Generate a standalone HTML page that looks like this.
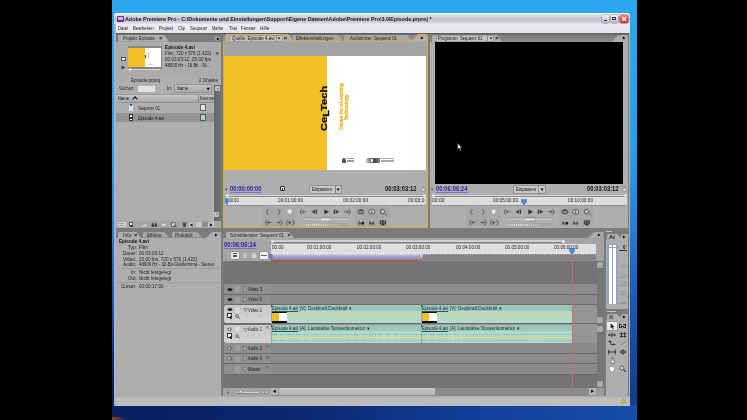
<!DOCTYPE html>
<html><head><meta charset="utf-8"><title>Adobe Premiere Pro</title>
<style>
html,body{margin:0;padding:0;background:#000;}
body{width:747px;height:420px;overflow:hidden;position:relative;font-family:"Liberation Sans",sans-serif;}
#s{position:absolute;left:0;top:0;width:747px;height:420px;overflow:hidden;will-change:transform;}
#s div,#s svg,#s .t{position:absolute;}
#s .t{white-space:nowrap;transform-origin:0 50%;display:block;}
</style></head><body><div id="s">
<div style="left:111.50px;top:0.00px;width:525.60px;height:420.00px;background:linear-gradient(#2ba7f0 0%,#2aa0ea 35%,#2586dc 50%,#2072cc 60%,#1a5ab8 72%,#15469c 85%,#133c8c 96%,#123a88 100%);"></div>
<div style="left:111.50px;top:0.00px;width:6.00px;height:420.00px;background:linear-gradient(#2ba7f0 0%,#2aa2ec 35%,#2288dc 52%,#185cbc 70%,#0f3482 83%,#0a2464 92%,#0a205c 100%);"></div>
<div style="left:111.50px;top:405.00px;width:525.60px;height:15.00px;background:linear-gradient(90deg,#0a2060 0%,#0b2870 35%,#12409a 70%,#174ea8 100%);"></div>
<div style="left:111.50px;top:416.50px;width:14.00px;height:3.50px;background:linear-gradient(90deg,#8a4424,#0a2060);"></div>
<div style="left:114.20px;top:13.30px;width:516.10px;height:392.40px;background:#aeb0c2;border-radius:2.5px 2.5px 0 0;"></div>
<div style="left:114.40px;top:13.30px;width:515.80px;height:11.00px;background:linear-gradient(#ffffff 0%,#e0e0ea 18%,#c2c2d0 55%,#cacad8 80%,#e6e6ee 100%);border-radius:2.5px 2.5px 0 0;"></div>
<div style="left:117.00px;top:15.50px;width:6.50px;height:6.50px;background:#6a2a80;border-radius:1px;"></div>
<div style="left:118.00px;top:16.50px;width:4.50px;height:3.20px;background:#d8b8e0;"></div>
<span class="t" style="left:125.00px;top:16.14px;font-size:5.6px;line-height:6.72px;color:#181820;font-weight:bold;transform:scaleX(0.956);">Adobe Premiere Pro - C:\Dokumente und Einstellungen\Support\Eigene Dateien\Adobe\Premiere Pro\3.0\Episode.prproj *</span>
<div style="left:601.50px;top:14.80px;width:7.20px;height:8.00px;background:linear-gradient(#f4f4fa,#b4b4c8);border-radius:1.5px;box-shadow:0 0 0 0.5px #8888a0;"></div>
<div style="left:603.50px;top:20.00px;width:3.00px;height:1.00px;background:#333;"></div>
<div style="left:610.50px;top:14.80px;width:7.20px;height:8.00px;background:linear-gradient(#f4f4fa,#b4b4c8);border-radius:1.5px;box-shadow:0 0 0 0.5px #8888a0;"></div>
<div style="left:612.30px;top:16.80px;width:3.60px;height:3.60px;background:transparent;border:0.7px solid #333;border-top-width:1.4px;box-sizing:border-box;"></div>
<div style="left:620.00px;top:14.80px;width:8.20px;height:8.00px;background:linear-gradient(#f08878,#c83428);border-radius:1.5px;box-shadow:0 0 0 0.5px #a04040;"></div>
<svg style="left:620.00px;top:14.80px;" width="8.2" height="8" viewBox="0 0 8.2 8"><path d="M2.3 2.2L5.9 5.8M5.9 2.2L2.3 5.8" stroke="#fff" stroke-width="1.2" fill="none"/></svg>
<div style="left:115.50px;top:24.30px;width:514.00px;height:8.70px;background:linear-gradient(#ececf4,#e4e4ee);"></div>
<span class="t" style="left:118.00px;top:25.34px;font-size:5.6px;line-height:6.72px;color:#222;transform:scaleX(0.765);">Datei</span>
<span class="t" style="left:133.00px;top:25.34px;font-size:5.6px;line-height:6.72px;color:#222;transform:scaleX(0.757);">Bearbeiten</span>
<span class="t" style="left:159.00px;top:25.34px;font-size:5.6px;line-height:6.72px;color:#222;transform:scaleX(0.803);">Projekt</span>
<span class="t" style="left:178.00px;top:25.34px;font-size:5.6px;line-height:6.72px;color:#222;transform:scaleX(0.726);">Clip</span>
<span class="t" style="left:190.00px;top:25.34px;font-size:5.6px;line-height:6.72px;color:#222;transform:scaleX(0.783);">Sequenz</span>
<span class="t" style="left:212.30px;top:25.34px;font-size:5.6px;line-height:6.72px;color:#222;transform:scaleX(0.720);">Marke</span>
<span class="t" style="left:228.50px;top:25.34px;font-size:5.6px;line-height:6.72px;color:#222;transform:scaleX(0.771);">Titel</span>
<span class="t" style="left:240.80px;top:25.34px;font-size:5.6px;line-height:6.72px;color:#222;transform:scaleX(0.780);">Fenster</span>
<span class="t" style="left:260.00px;top:25.34px;font-size:5.6px;line-height:6.72px;color:#222;transform:scaleX(0.848);">Hilfe</span>
<div style="left:115.50px;top:33.00px;width:513.50px;height:362.50px;background:#7b7b7b;"></div>
<div style="left:115.50px;top:33.00px;width:513.50px;height:2.00px;background:linear-gradient(#555,#7b7b7b);"></div>
<div style="left:115.50px;top:395.50px;width:514.00px;height:10.00px;background:linear-gradient(#a8a8a8,#bdbdbd 20%,#bcbcbc);"></div>
<svg style="left:621.30px;top:398.00px;" width="5" height="5.5" viewBox="0 0 5 5.5"><path d="M2.5 0.5L4.7 4.8H0.3Z" fill="#e8c820" stroke="#8a6a00" stroke-width="0.4"/></svg>
<div style="left:116.00px;top:41.50px;width:104.60px;height:186.00px;background:#aeaeae;"></div>
<div style="left:116.00px;top:41.50px;width:104.60px;height:34.00px;background:#ababab;"></div>
<svg style="left:117.50px;top:35.00px;" width="51" height="6.7" viewBox="0 0 51 6.7"><path d="M0 6.7 L0 1.5 Q0 0 1.5 0 L45 0 Q47 0 48 2 L51 6.7Z" fill="#aeaeae"/></svg>
<span class="t" style="left:123.00px;top:35.32px;font-size:5.3px;line-height:6.36px;color:#222;transform:scaleX(0.829);">Projekt: Episode</span>
<span class="t" style="left:159.00px;top:35.20px;font-size:5.5px;line-height:6.60px;color:#111;font-weight:bold;">×</span>
<div style="left:214.00px;top:36.00px;width:6.00px;height:5.00px;background:#999;border-radius:3px;"></div>
<svg style="left:215.50px;top:36.50px;" width="4" height="4" viewBox="0 0 4 4"><path d="M1 0.5L3.4 2L1 3.5Z" fill="#111"/></svg>
<div style="left:128.00px;top:45.50px;width:33.50px;height:24.50px;background:#868686;"></div>
<div style="left:128.30px;top:48.30px;width:16.70px;height:18.60px;background:#f2bf27;"></div>
<div style="left:145.00px;top:48.30px;width:16.30px;height:18.60px;background:#ffffff;"></div>
<div style="left:147.50px;top:51.50px;width:0.60px;height:6.50px;background:#f0cc60;"></div>
<div style="left:144.80px;top:54.50px;width:0.60px;height:3.20px;background:#444;"></div>
<div style="left:148.00px;top:64.00px;width:5.00px;height:0.80px;background:#ccc;"></div>
<div style="left:128.00px;top:69.00px;width:33.00px;height:1.20px;background:#d8d8d8;border-radius:1px;"></div>
<div style="left:128.50px;top:68.20px;width:2.50px;height:2.50px;background:#eee;border-radius:50%;"></div>
<div style="left:121.00px;top:57.00px;width:4.50px;height:3.50px;background:#e8e8e8;border:0.5px solid #555;box-sizing:border-box;"></div>
<svg style="left:121.00px;top:64.50px;" width="5" height="5" viewBox="0 0 5 5"><path d="M0.5 0.5L4.5 2.5L0.5 4.5Z" fill="#444"/></svg>
<span class="t" style="left:165.00px;top:44.12px;font-size:5.3px;line-height:6.36px;color:#111;font-weight:bold;transform:scaleX(0.886);">Episode 4.avi</span>
<span class="t" style="left:165.00px;top:50.30px;font-size:5px;line-height:6.00px;color:#222;transform:scaleX(0.895);">Film, 720 x 576 (1,422)</span>
<span class="t" style="left:215.50px;top:50.30px;font-size:5px;line-height:6.00px;color:#222;">▾</span>
<span class="t" style="left:165.00px;top:56.20px;font-size:5px;line-height:6.00px;color:#222;transform:scaleX(0.924);">00:03:03:12, 25,00 fps</span>
<span class="t" style="left:165.00px;top:62.00px;font-size:5px;line-height:6.00px;color:#222;transform:scaleX(0.866);">48000 Hz - 16 Bit - St...</span>
<div style="left:120.00px;top:77.00px;width:6.00px;height:5.00px;background:#aaa;border-radius:1px;"></div>
<span class="t" style="left:131.00px;top:77.00px;font-size:5px;line-height:6.00px;color:#222;transform:scaleX(0.900);">Episode.prproj</span>
<span class="t" style="left:199.00px;top:77.00px;font-size:5px;line-height:6.00px;color:#222;transform:scaleX(0.888);">2 Objekte</span>
<span class="t" style="left:119.00px;top:85.30px;font-size:5px;line-height:6.00px;color:#222;transform:scaleX(0.845);">Suchen:</span>
<div style="left:137.00px;top:85.00px;width:18.00px;height:6.70px;background:#e4e4e4;box-shadow:inset 0.5px 0.5px 0 #888;"></div>
<span class="t" style="left:167.00px;top:85.30px;font-size:5px;line-height:6.00px;color:#222;transform:scaleX(0.989);">In:</span>
<div style="left:175.00px;top:85.00px;width:36.00px;height:6.70px;background:linear-gradient(#c4c4c4,#a8a8a8);box-shadow:0 0 0 0.5px #777;"></div>
<span class="t" style="left:177.00px;top:85.30px;font-size:5px;line-height:6.00px;color:#111;transform:scaleX(0.825);">Name</span>
<svg style="left:206.00px;top:86.50px;" width="4.5" height="4" viewBox="0 0 4.5 4"><path d="M0.5 0.8H4L2.25 3.4Z" fill="#111"/></svg>
<div style="left:213.50px;top:85.00px;width:7.50px;height:136.40px;background:linear-gradient(90deg,#646464,#707476);"></div>
<div style="left:212.60px;top:92.00px;width:0.90px;height:129.00px;background:#bababa;"></div>
<div style="left:214.50px;top:85.50px;width:5.50px;height:5.50px;background:#c0c0c0;border-radius:1px;"></div>
<div style="left:214.20px;top:211.80px;width:5.20px;height:5.60px;background:#c0c0c0;border-radius:1px;"></div>
<svg style="left:214.80px;top:213.30px;" width="4" height="3" viewBox="0 0 4 3"><path d="M0.5 0.5H3.5L2 2.6Z" fill="#888"/></svg>
<svg style="left:215.50px;top:86.50px;" width="4" height="3" viewBox="0 0 4 3"><path d="M0.5 2.5H3.5L2 0.4Z" fill="#888"/></svg>
<div style="left:116.00px;top:94.50px;width:98.00px;height:7.30px;background:linear-gradient(#c6c6c6,#a9a9a9);box-shadow:0 0.5px 0 #777,0 -0.5px 0 #888;"></div>
<div style="left:198.30px;top:94.50px;width:0.70px;height:7.30px;background:#888;"></div>
<span class="t" style="left:118.00px;top:95.20px;font-size:5px;line-height:6.00px;color:#111;transform:scaleX(0.825);">Name</span>
<svg style="left:131.50px;top:96.00px;" width="6" height="4" viewBox="0 0 6 4"><path d="M0.7 3.4L3 0.8L5.3 3.4" stroke="#111" stroke-width="1.1" fill="none"/></svg>
<span class="t" style="left:200.00px;top:95.20px;font-size:5px;line-height:6.00px;color:#111;transform:scaleX(0.826);">Kennze</span>
<div style="left:116.00px;top:113.00px;width:98.00px;height:8.70px;background:#949494;"></div>
<div style="left:129.00px;top:104.50px;width:4.00px;height:6.00px;background:#d8e4f0;border-radius:1px;"></div>
<div style="left:130.00px;top:103.50px;width:1.50px;height:2.00px;background:#3060c0;"></div>
<span class="t" style="left:138.00px;top:104.50px;font-size:5px;line-height:6.00px;color:#222;transform:scaleX(0.824);">Sequenz 01</span>
<div style="left:199.50px;top:104.30px;width:6.50px;height:6.50px;background:#d8e8e2;border:0.6px solid #666;box-sizing:border-box;"></div>
<div style="left:128.50px;top:114.20px;width:4.50px;height:6.50px;background:#eee;border:0.6px solid #333;box-sizing:border-box;"></div>
<div style="left:129.80px;top:116.50px;width:2.00px;height:2.50px;background:#333;"></div>
<span class="t" style="left:138.00px;top:114.50px;font-size:5px;line-height:6.00px;color:#111;transform:scaleX(0.866);">Episode 4.avi</span>
<div style="left:199.50px;top:114.00px;width:6.50px;height:6.50px;background:#a8d8c4;border:0.6px solid #555;box-sizing:border-box;"></div>
<div style="left:116.00px;top:221.40px;width:104.60px;height:6.20px;background:#a6a6a6;"></div>
<div style="left:117.00px;top:221.80px;width:8.50px;height:5.60px;background:#d2d2d2;border-radius:1px;"></div>
<div style="left:118.30px;top:222.80px;width:1.20px;height:1.20px;background:#666;"></div>
<div style="left:118.30px;top:224.80px;width:1.20px;height:1.20px;background:#666;"></div>
<div style="left:120.30px;top:222.80px;width:4.00px;height:1.20px;background:#999;"></div>
<div style="left:120.30px;top:224.80px;width:4.00px;height:1.20px;background:#999;"></div>
<div style="left:128.60px;top:222.00px;width:4.80px;height:3.60px;background:#f4f4f4;border:0.5px solid #555;box-sizing:border-box;"></div>
<div style="left:129.50px;top:225.60px;width:3.00px;height:1.20px;background:#333;"></div>
<svg style="left:140.50px;top:222.50px;" width="7" height="4.5" viewBox="0 0 7 4.5"><path d="M0.5 4V1.5H3V0.8H6.5V4Z" fill="#c9c9c9" stroke="#888" stroke-width="0.4"/></svg>
<svg style="left:150.50px;top:222.00px;" width="7" height="5.5" viewBox="0 0 7 5.5"><circle cx="1.8" cy="3.6" r="1.4" fill="#3a3a3a"/><circle cx="4.8" cy="3.6" r="1.4" fill="#3a3a3a"/><rect x="1.2" y="0.8" width="1.3" height="2.5" fill="#3a3a3a"/><rect x="4.2" y="0.8" width="1.3" height="2.5" fill="#3a3a3a"/></svg>
<svg style="left:160.50px;top:222.30px;" width="6" height="5" viewBox="0 0 6 5"><path d="M0.5 4.2V1H2.2L2.8 1.6H5V4.2Z" fill="#e2e2e2" stroke="#777" stroke-width="0.4"/></svg>
<svg style="left:171.00px;top:222.00px;" width="7" height="5.5" viewBox="0 0 7 5.5"><rect x="0.6" y="0.8" width="3.4" height="3.6" fill="#ddd" stroke="#333" stroke-width="0.6"/><path d="M3.8 3.2L5.6 5.2" stroke="#222" stroke-width="0.9"/></svg>
<svg style="left:181.50px;top:222.00px;" width="5" height="5.5" viewBox="0 0 5 5.5"><path d="M0.8 1.4H4.2L3.7 5H1.3Z" fill="#444"/><rect x="0.5" y="0.6" width="4" height="0.8" fill="#333"/></svg>
<div style="left:188.80px;top:221.80px;width:5.50px;height:5.60px;background:#c8c8c8;"></div>
<svg style="left:189.30px;top:222.60px;" width="4.5" height="4" viewBox="0 0 4.5 4"><path d="M3.6 0.3L0.8 2L3.6 3.7Z" fill="#111"/></svg>
<div style="left:195.50px;top:221.80px;width:6.50px;height:5.60px;background:#c6c6c6;border-radius:1px;"></div>
<div style="left:202.00px;top:221.80px;width:5.50px;height:5.60px;background:#8e8e8e;"></div>
<div style="left:207.50px;top:221.80px;width:6.00px;height:5.60px;background:#c8c8c8;"></div>
<svg style="left:208.50px;top:222.60px;" width="4.5" height="4" viewBox="0 0 4.5 4"><path d="M0.9 0.3L3.7 2L0.9 3.7Z" fill="#111"/></svg>
<div style="left:116.00px;top:237.50px;width:104.60px;height:158.00px;background:#aeaeae;"></div>
<svg style="left:118.00px;top:231.50px;" width="23" height="6.2" viewBox="0 0 23 6.2"><path d="M0 6.2 L0 1.5 Q0 0 1.5 0 L17 0 Q19 0 20 2 L23 6.2Z" fill="#aeaeae"/></svg>
<span class="t" style="left:122.50px;top:231.80px;font-size:5px;line-height:6.00px;color:#222;transform:scaleX(1.019);">Info</span>
<span class="t" style="left:134.00px;top:231.50px;font-size:5.5px;line-height:6.60px;color:#111;font-weight:bold;">×</span>
<svg style="left:143.00px;top:232.00px;" width="26" height="5.6" viewBox="0 0 26 5.6"><path d="M0 5.6 L0 1.5 Q0 0 1.5 0 L20 0 Q22 0 23 2 L26 5.6Z" fill="#a6a6a6"/></svg>
<span class="t" style="left:146.50px;top:231.80px;font-size:5px;line-height:6.00px;color:#222;transform:scaleX(0.937);">Effekte</span>
<svg style="left:171.50px;top:232.00px;" width="30" height="5.6" viewBox="0 0 30 5.6"><path d="M0 5.6 L0 1.5 Q0 0 1.5 0 L24 0 Q26 0 27 2 L30 5.6Z" fill="#a6a6a6"/></svg>
<span class="t" style="left:175.00px;top:231.80px;font-size:5px;line-height:6.00px;color:#222;transform:scaleX(0.900);">Protokoll</span>
<svg style="left:203.00px;top:231.50px;" width="18" height="6.2" viewBox="0 0 18 6.2"><path d="M0 6.2 Q4 6.2 6 3 Q8 0 11 0 H18 V6.2Z" fill="#aeaeae"/></svg>
<svg style="left:214.00px;top:232.80px;" width="4.5" height="4" viewBox="0 0 4.5 4"><path d="M0.9 0.4L3.7 2L0.9 3.6Z" fill="#111"/></svg>
<span class="t" style="left:118.50px;top:238.18px;font-size:5.2px;line-height:6.24px;color:#111;font-weight:bold;transform:scaleX(0.903);">Episode 4.avi</span>
<span class="t" style="left:127.71px;top:244.30px;font-size:5px;line-height:6.00px;color:#222;transform:scaleX(0.930);">Typ:</span>
<span class="t" style="left:138.50px;top:244.30px;font-size:5px;line-height:6.00px;color:#222;transform:scaleX(0.930);">Film</span>
<span class="t" style="left:122.54px;top:250.00px;font-size:5px;line-height:6.00px;color:#222;transform:scaleX(0.930);">Dauer:</span>
<span class="t" style="left:138.50px;top:250.00px;font-size:5px;line-height:6.00px;color:#222;transform:scaleX(0.930);">00:03:03:12</span>
<span class="t" style="left:123.40px;top:255.70px;font-size:5px;line-height:6.00px;color:#222;transform:scaleX(0.930);">Video:</span>
<span class="t" style="left:138.50px;top:255.70px;font-size:5px;line-height:6.00px;color:#222;transform:scaleX(0.930);">25,00 fps, 720 x 576 (1,422)</span>
<span class="t" style="left:123.32px;top:261.40px;font-size:5px;line-height:6.00px;color:#222;transform:scaleX(0.930);">Audio:</span>
<span class="t" style="left:138.50px;top:261.40px;font-size:5px;line-height:6.00px;color:#222;transform:scaleX(0.868);">48000 Hz - 32-Bit-Gleitkomma - Stereo</span>
<div style="left:117.00px;top:268.00px;width:103.00px;height:0.50px;background:#9e9e9e;"></div>
<span class="t" style="left:131.33px;top:269.30px;font-size:5px;line-height:6.00px;color:#222;transform:scaleX(0.930);">In:</span>
<span class="t" style="left:138.50px;top:269.30px;font-size:5px;line-height:6.00px;color:#222;transform:scaleX(0.930);">Nicht festgelegt</span>
<span class="t" style="left:127.71px;top:275.00px;font-size:5px;line-height:6.00px;color:#222;transform:scaleX(0.930);">Out:</span>
<span class="t" style="left:138.50px;top:275.00px;font-size:5px;line-height:6.00px;color:#222;transform:scaleX(0.930);">Nicht festgelegt</span>
<div style="left:117.00px;top:281.50px;width:103.00px;height:0.50px;background:#9e9e9e;"></div>
<span class="t" style="left:120.50px;top:282.70px;font-size:5px;line-height:6.00px;color:#222;transform:scaleX(0.930);">Cursor:</span>
<span class="t" style="left:138.50px;top:282.70px;font-size:5px;line-height:6.00px;color:#222;transform:scaleX(0.930);">00:00:17:00</span>
<div style="left:222.50px;top:40.80px;width:205.50px;height:187.00px;background:#aeaeae;box-shadow:inset 0 0 0 1px #d9ac38;"></div>
<div style="left:222.50px;top:34.50px;width:205.50px;height:6.50px;background:#8a8a8a;"></div>
<svg style="left:293.00px;top:35.00px;" width="50" height="5.9" viewBox="0 0 50 5.9"><path d="M0 5.9 L0 1.5 Q0 0 1.5 0 L44 0 Q46 0 47 2 L50 5.9Z" fill="#a6a6a6"/></svg>
<span class="t" style="left:295.50px;top:35.20px;font-size:5px;line-height:6.00px;color:#222;transform:scaleX(0.890);">Effekteinstellungen</span>
<svg style="left:344.00px;top:35.00px;" width="68" height="5.9" viewBox="0 0 68 5.9"><path d="M0 5.9 L0 1.5 Q0 0 1.5 0 L62 0 Q64 0 65 2 L68 5.9Z" fill="#a6a6a6"/></svg>
<span class="t" style="left:350.00px;top:35.20px;font-size:5px;line-height:6.00px;color:#222;transform:scaleX(0.863);">Audiomixer: Sequenz 01</span>
<svg style="left:225.00px;top:34.30px;" width="72" height="8.5" viewBox="0 0 72 8.5"><path d="M0.5 8.5 V2 Q0.5 0.5 2 0.5 H61.5 Q64 0.5 65 2.5 L67.8 7.5 V8.5Z" fill="#aeaeae"/><path d="M0.5 7.5 V2 Q0.5 0.5 2 0.5 H61.5 Q64 0.5 65 2.5 L67.5 7" fill="none" stroke="#d9ac38" stroke-width="1"/></svg>
<div style="left:229.50px;top:35.80px;width:46.00px;height:5.00px;background:#c4c4c4;box-shadow:0 0 0 0.4px #888;"></div>
<span class="t" style="left:231.50px;top:35.40px;font-size:5px;line-height:6.00px;color:#111;transform:scaleX(0.900);">Quelle: Episode 4.avi</span>
<div style="left:276.50px;top:35.80px;width:5.00px;height:5.00px;background:#c8c8c8;box-shadow:0 0 0 0.4px #666;"></div>
<svg style="left:277.00px;top:36.80px;" width="4" height="3" viewBox="0 0 4 3"><path d="M0.6 0.6H3.4L2 2.5Z" fill="#111"/></svg>
<span class="t" style="left:283.70px;top:35.10px;font-size:5.5px;line-height:6.60px;color:#111;font-weight:bold;">×</span>
<svg style="left:410.00px;top:34.30px;" width="18" height="8.5" viewBox="0 0 18 8.5"><path d="M1 8.5 L1.5 7 Q3 7 5 3.5 Q7 0.5 10 0.5 H16 Q17 0.5 17 2 V8.5Z" fill="#aeaeae"/><path d="M0 7 Q3 7 5 3.5 Q7 0.5 10 0.5 H16 Q17.5 0.5 17.5 2 V8.5" fill="none" stroke="#d9ac38" stroke-width="1"/></svg>
<svg style="left:420.00px;top:36.30px;" width="4.5" height="4" viewBox="0 0 4.5 4"><path d="M0.9 0.4L3.7 2L0.9 3.6Z" fill="#111"/></svg>
<div style="left:223.50px;top:41.80px;width:203.50px;height:13.80px;background:#a3a3a3;"></div>
<div style="left:223.50px;top:55.50px;width:103.60px;height:114.60px;background:#f4c027;"></div>
<div style="left:327.10px;top:55.50px;width:99.40px;height:114.60px;background:#ffffff;"></div>
<span class="t" style="left:319.6px;top:131.2px;font-size:9.3px;line-height:9.3px;font-weight:bold;color:#111;transform-origin:0 0;transform:rotate(-90deg) scaleX(1.17);letter-spacing:0.1px;-webkit-text-stroke:0.3px #111;">Ce<span style="position:relative;top:2.2px;font-weight:bold;-webkit-text-stroke:0.45px #111;">L</span>Tech</span>
<span class="t" style="left:338.6px;top:129.6px;font-size:4.6px;line-height:5.2px;font-weight:bold;color:#eab520;-webkit-text-stroke:0.25px #eab520;transform-origin:0 0;transform:rotate(-90deg);width:45px;text-align:center;">Centre for e-Learning<br>Technology</span>
<div style="left:341.50px;top:157.50px;width:4.00px;height:5.00px;background:#555;border-radius:2px 2px 1px 1px;"></div>
<div style="left:347.00px;top:158.20px;width:7.00px;height:0.70px;background:#999;"></div>
<div style="left:347.00px;top:159.70px;width:7.00px;height:0.70px;background:#999;"></div>
<div style="left:347.00px;top:161.20px;width:7.00px;height:0.70px;background:#999;"></div>
<div style="left:365.50px;top:157.50px;width:14.00px;height:5.00px;background:linear-gradient(90deg,#ccc,#666 40%,#444 60%,#888);"></div>
<div style="left:371.00px;top:158.50px;width:2.00px;height:3.00px;background:#eee;"></div>
<div style="left:381.00px;top:158.20px;width:13.00px;height:0.70px;background:#aaa;"></div>
<div style="left:381.00px;top:159.70px;width:13.00px;height:0.70px;background:#aaa;"></div>
<div style="left:381.00px;top:161.20px;width:13.00px;height:0.70px;background:#aaa;"></div>
<span class="t" style="left:224.50px;top:185.70px;font-size:5px;line-height:6.00px;color:#555;">▾</span>
<span class="t" style="left:230.00px;top:184.14px;font-size:7.6px;line-height:9.12px;color:#2525a8;font-weight:bold;transform:scaleX(0.761);text-decoration:underline;text-decoration-thickness:0.5px;text-underline-offset:0.6px;text-decoration-color:#7474c4;">00:00:00:00</span>
<div style="left:279.50px;top:186.30px;width:5.00px;height:5.00px;background:#eee;border:0.7px solid #222;box-sizing:border-box;border-radius:1px;"></div>
<div style="left:281.50px;top:187.60px;width:1.00px;height:2.40px;background:#222;"></div>
<div style="left:310.00px;top:186.00px;width:25.00px;height:6.50px;background:#c6c6c6;box-shadow:0 0 0 0.5px #777;"></div>
<span class="t" style="left:312.00px;top:186.20px;font-size:5px;line-height:6.00px;color:#111;transform:scaleX(0.857);">Einpassen</span>
<div style="left:335.50px;top:186.00px;width:5.50px;height:6.50px;background:#c6c6c6;box-shadow:0 0 0 0.5px #666;"></div>
<svg style="left:336.20px;top:187.50px;" width="4.2" height="3.5" viewBox="0 0 4.2 3.5"><path d="M0.5 0.6H3.7L2.1 3Z" fill="#111"/></svg>
<span class="t" style="left:385.00px;top:184.14px;font-size:7.6px;line-height:9.12px;color:#111;font-weight:bold;transform:scaleX(0.761);">00:03:03:12</span>
<div style="left:421.50px;top:187.50px;width:3.00px;height:3.00px;background:#ddd;border-radius:50%;box-shadow:0 0 0 0.4px #666;"></div>
<div style="left:225.00px;top:194.50px;width:200.50px;height:1.60px;background:#d4d4d4;border-radius:1px;box-shadow:0 0.6px 0 #666;"></div>
<div style="left:225.50px;top:193.50px;width:3.00px;height:3.00px;background:#e8e8e8;border-radius:50%;"></div>
<div style="left:422.50px;top:193.50px;width:3.00px;height:3.00px;background:#e8e8e8;border-radius:50%;"></div>
<div style="left:225.00px;top:197.40px;width:200.50px;height:7.40px;background:linear-gradient(#e2e2e2,#d6d6d6);border-radius:1px;box-shadow:0 0.6px 0 #777;"></div>
<svg style="left:225.00px;top:203.10px;" width="200" height="2" viewBox="0 0 200 2"><rect x="0.00" y="0" width="0.6" height="1.5" fill="#fff"/><rect x="4.05" y="0" width="0.6" height="1.5" fill="#fff"/><rect x="8.10" y="0" width="0.6" height="1.5" fill="#fff"/><rect x="12.15" y="0" width="0.6" height="1.5" fill="#fff"/><rect x="16.20" y="0" width="0.6" height="1.5" fill="#fff"/><rect x="20.25" y="0" width="0.6" height="1.5" fill="#fff"/><rect x="24.30" y="0" width="0.6" height="1.5" fill="#fff"/><rect x="28.35" y="0" width="0.6" height="1.5" fill="#fff"/><rect x="32.40" y="0" width="0.6" height="1.5" fill="#fff"/><rect x="36.45" y="0" width="0.6" height="1.5" fill="#fff"/><rect x="40.50" y="0" width="0.6" height="1.5" fill="#fff"/><rect x="44.55" y="0" width="0.6" height="1.5" fill="#fff"/><rect x="48.60" y="0" width="0.6" height="1.5" fill="#fff"/><rect x="52.65" y="0" width="0.6" height="1.5" fill="#fff"/><rect x="56.70" y="0" width="0.6" height="1.5" fill="#fff"/><rect x="60.75" y="0" width="0.6" height="1.5" fill="#fff"/><rect x="64.80" y="0" width="0.6" height="1.5" fill="#fff"/><rect x="68.85" y="0" width="0.6" height="1.5" fill="#fff"/><rect x="72.90" y="0" width="0.6" height="1.5" fill="#fff"/><rect x="76.95" y="0" width="0.6" height="1.5" fill="#fff"/><rect x="81.00" y="0" width="0.6" height="1.5" fill="#fff"/><rect x="85.05" y="0" width="0.6" height="1.5" fill="#fff"/><rect x="89.10" y="0" width="0.6" height="1.5" fill="#fff"/><rect x="93.15" y="0" width="0.6" height="1.5" fill="#fff"/><rect x="97.20" y="0" width="0.6" height="1.5" fill="#fff"/><rect x="101.25" y="0" width="0.6" height="1.5" fill="#fff"/><rect x="105.30" y="0" width="0.6" height="1.5" fill="#fff"/><rect x="109.35" y="0" width="0.6" height="1.5" fill="#fff"/><rect x="113.40" y="0" width="0.6" height="1.5" fill="#fff"/><rect x="117.45" y="0" width="0.6" height="1.5" fill="#fff"/><rect x="121.50" y="0" width="0.6" height="1.5" fill="#fff"/><rect x="125.55" y="0" width="0.6" height="1.5" fill="#fff"/><rect x="129.60" y="0" width="0.6" height="1.5" fill="#fff"/><rect x="133.65" y="0" width="0.6" height="1.5" fill="#fff"/><rect x="137.70" y="0" width="0.6" height="1.5" fill="#fff"/><rect x="141.75" y="0" width="0.6" height="1.5" fill="#fff"/><rect x="145.80" y="0" width="0.6" height="1.5" fill="#fff"/><rect x="149.85" y="0" width="0.6" height="1.5" fill="#fff"/><rect x="153.90" y="0" width="0.6" height="1.5" fill="#fff"/><rect x="157.95" y="0" width="0.6" height="1.5" fill="#fff"/><rect x="162.00" y="0" width="0.6" height="1.5" fill="#fff"/><rect x="166.05" y="0" width="0.6" height="1.5" fill="#fff"/><rect x="170.10" y="0" width="0.6" height="1.5" fill="#fff"/><rect x="174.15" y="0" width="0.6" height="1.5" fill="#fff"/><rect x="178.20" y="0" width="0.6" height="1.5" fill="#fff"/><rect x="182.25" y="0" width="0.6" height="1.5" fill="#fff"/><rect x="186.30" y="0" width="0.6" height="1.5" fill="#fff"/><rect x="190.35" y="0" width="0.6" height="1.5" fill="#fff"/><rect x="194.40" y="0" width="0.6" height="1.5" fill="#fff"/><rect x="198.45" y="0" width="0.6" height="1.5" fill="#fff"/></svg>
<span class="t" style="left:228.50px;top:197.00px;font-size:5px;line-height:6.00px;color:#222;transform:scaleX(0.759);">00:00</span>
<span class="t" style="left:278.00px;top:197.00px;font-size:5px;line-height:6.00px;color:#222;transform:scaleX(0.947);">00:01:00:00</span>
<span class="t" style="left:343.00px;top:197.00px;font-size:5px;line-height:6.00px;color:#222;transform:scaleX(0.947);">00:02:00:00</span>
<span class="t" style="left:408.00px;top:197.00px;font-size:5px;line-height:6.00px;color:#222;transform:scaleX(0.989);">00:03:0</span>
<svg style="left:224.50px;top:197.50px;" width="4" height="8" viewBox="0 0 4 8"><path d="M0.3 0.3H3.2V4L1.7 6.8L0.3 4Z" fill="#4a8ae0" stroke="#1a4aa0" stroke-width="0.4"/></svg>
<svg style="left:261.70px;top:206.80px;" width="128" height="20" viewBox="0 0 128 20"><rect x="0" y="0" width="34.3" height="19.7" fill="#a7a7a7"/><rect x="93.3" y="0" width="33.7" height="19.7" fill="#a7a7a7"/><path d="M6.2 2.4Q5.2 2.4 5.2 3.5999999999999996Q5.2 4.8 4.3 4.8Q5.2 4.8 5.2 6.0Q5.2 7.199999999999999 6.2 7.199999999999999" stroke="#4a4a4a" stroke-width="0.75" fill="none" stroke-linecap="round" stroke-linejoin="round"/><path d="M16.400000000000002 2.4Q17.400000000000002 2.4 17.400000000000002 3.5999999999999996Q17.400000000000002 4.8 18.3 4.8Q17.400000000000002 4.8 17.400000000000002 6.0Q17.400000000000002 7.199999999999999 16.400000000000002 7.199999999999999" stroke="#4a4a4a" stroke-width="0.75" fill="none" stroke-linecap="round" stroke-linejoin="round"/><path d="M25.6 2.4H29.6V5L27.6 7.6L25.6 5Z" fill="#ececec" stroke="#bbb" stroke-width="0.3"/><path d="M5.1000000000000005 13.1Q4.1000000000000005 13.1 4.1000000000000005 14.3Q4.1000000000000005 15.5 3.2 15.5Q4.1000000000000005 15.5 4.1000000000000005 16.7Q4.1000000000000005 17.9 5.1000000000000005 17.9" stroke="#4a4a4a" stroke-width="0.75" fill="none" stroke-linecap="round" stroke-linejoin="round"/><path d="M9 15.5H5.5M6.9 14.4L5.5 15.5L6.9 16.6" stroke="#4a4a4a" stroke-width="0.75" fill="none" stroke-linecap="round" stroke-linejoin="round"/><path d="M14.6 15.5H18.2M16.8 14.4L18.2 15.5L16.8 16.6" stroke="#4a4a4a" stroke-width="0.75" fill="none" stroke-linecap="round" stroke-linejoin="round"/><path d="M18.700000000000003 13.1Q19.700000000000003 13.1 19.700000000000003 14.3Q19.700000000000003 15.5 20.6 15.5Q19.700000000000003 15.5 19.700000000000003 16.7Q19.700000000000003 17.9 18.700000000000003 17.9" stroke="#4a4a4a" stroke-width="0.75" fill="none" stroke-linecap="round" stroke-linejoin="round"/><path d="M25.9 13.1Q24.9 13.1 24.9 14.3Q24.9 15.5 24 15.5Q24.9 15.5 24.9 16.7Q24.9 17.9 25.9 17.9" stroke="#4a4a4a" stroke-width="0.75" fill="none" stroke-linecap="round" stroke-linejoin="round"/><path d="M26.6 14.0L29.6 15.5L26.6 17.0Z" fill="#4a4a4a"/><path d="M30.5 13.1Q31.5 13.1 31.5 14.3Q31.5 15.5 32.4 15.5Q31.5 15.5 31.5 16.7Q31.5 17.9 30.5 17.9" stroke="#4a4a4a" stroke-width="0.75" fill="none" stroke-linecap="round" stroke-linejoin="round"/><path d="M39.699999999999996 2.4Q38.699999999999996 2.4 38.699999999999996 3.5999999999999996Q38.699999999999996 4.8 37.8 4.8Q38.699999999999996 4.8 38.699999999999996 6.0Q38.699999999999996 7.199999999999999 39.699999999999996 7.199999999999999" stroke="#4a4a4a" stroke-width="0.75" fill="none" stroke-linecap="round" stroke-linejoin="round"/><path d="M44 4.8H40.2M41.6 3.6999999999999997L40.2 4.8L41.6 5.9" stroke="#4a4a4a" stroke-width="0.75" fill="none" stroke-linecap="round" stroke-linejoin="round"/><path d="M53.2 2.5999999999999996L49.4 4.8L53.2 7.0Z" fill="#444"/><rect x="53.8" y="2.5999999999999996" width="1.3" height="4.4" fill="#444"/><path d="M62.4 2.1999999999999997L67 4.8L62.4 7.4Z" fill="#333"/><path d="M73.6 2.5999999999999996L77.4 4.8L73.6 7.0Z" fill="#444"/><rect x="71.7" y="2.5999999999999996" width="1.3" height="4.4" fill="#444"/><path d="M82.4 4.8H86.2M84.8 3.6999999999999997L86.2 4.8L84.8 5.9" stroke="#4a4a4a" stroke-width="0.75" fill="none" stroke-linecap="round" stroke-linejoin="round"/><path d="M86.69999999999999 2.4Q87.69999999999999 2.4 87.69999999999999 3.5999999999999996Q87.69999999999999 4.8 88.6 4.8Q87.69999999999999 4.8 87.69999999999999 6.0Q87.69999999999999 7.199999999999999 86.69999999999999 7.199999999999999" stroke="#4a4a4a" stroke-width="0.75" fill="none" stroke-linecap="round" stroke-linejoin="round"/><rect x="40.8" y="11.3" width="45.5" height="1.5" rx="0.7" fill="#d0d0d0"/><rect x="40.8" y="10.8" width="45.5" height="0.6" fill="#888"/><rect x="58.5" y="10.1" width="10.4" height="3.6" rx="1" fill="#f4f4f4" stroke="#666" stroke-width="0.4"/><rect x="58.9" y="10.3" width="9.6" height="1.2" fill="#888"/><rect x="40.8" y="16.3" width="45.5" height="3" rx="0.6" fill="#9c9c9c"/><rect x="41.30" y="16.7" width="1.3" height="2.3" fill="#e6e6e6" opacity="0.69"/><rect x="43.45" y="16.7" width="1.3" height="2.3" fill="#e6e6e6" opacity="0.75"/><rect x="45.60" y="16.7" width="1.3" height="2.3" fill="#e6e6e6" opacity="0.81"/><rect x="47.75" y="16.7" width="1.3" height="2.3" fill="#e6e6e6" opacity="0.88"/><rect x="49.90" y="16.7" width="1.3" height="2.3" fill="#e6e6e6" opacity="0.94"/><rect x="52.05" y="16.7" width="1.3" height="2.3" fill="#e6e6e6" opacity="1.00"/><rect x="54.20" y="16.7" width="1.3" height="2.3" fill="#e6e6e6" opacity="0.94"/><rect x="56.35" y="16.7" width="1.3" height="2.3" fill="#e6e6e6" opacity="0.88"/><rect x="58.50" y="16.7" width="1.3" height="2.3" fill="#e6e6e6" opacity="0.81"/><rect x="60.65" y="16.7" width="1.3" height="2.3" fill="#e6e6e6" opacity="0.75"/><rect x="62.80" y="16.7" width="1.3" height="2.3" fill="#e6e6e6" opacity="0.69"/><rect x="64.95" y="16.7" width="1.3" height="2.3" fill="#e6e6e6" opacity="0.62"/><rect x="67.10" y="16.7" width="1.3" height="2.3" fill="#e6e6e6" opacity="0.56"/><rect x="69.25" y="16.7" width="1.3" height="2.3" fill="#e6e6e6" opacity="0.50"/><rect x="71.40" y="16.7" width="1.3" height="2.3" fill="#e6e6e6" opacity="0.44"/><rect x="73.55" y="16.7" width="1.3" height="2.3" fill="#e6e6e6" opacity="0.38"/><rect x="75.70" y="16.7" width="1.3" height="2.3" fill="#e6e6e6" opacity="0.31"/><rect x="77.85" y="16.7" width="1.3" height="2.3" fill="#e6e6e6" opacity="0.25"/><rect x="80.00" y="16.7" width="1.3" height="2.3" fill="#e6e6e6" opacity="0.25"/><rect x="82.15" y="16.7" width="1.3" height="2.3" fill="#e6e6e6" opacity="0.25"/><rect x="84.30" y="16.7" width="1.3" height="2.3" fill="#e6e6e6" opacity="0.25"/><rect x="96.10000000000001" y="3.4" width="5.6" height="3.2" rx="0.8" fill="#888" stroke="#3a3a3a" stroke-width="0.7"/><rect x="97.60000000000001" y="2.3" width="2.6" height="1.2" fill="#3a3a3a"/><path d="M95.7 17.5L97.30000000000001 13.5L98.9 16.5L100.30000000000001 13.9L102.10000000000001 17.5Z" fill="#555"/><path d="M97.7 14.1L98.7 13.1L99.7 14.1Z" fill="#ddd"/><rect x="99.9" y="14.9" width="2.2" height="2.4" fill="#222"/><rect x="106.9" y="2.8" width="5.6" height="4" rx="0.9" fill="#ccc" stroke="#3a3a3a" stroke-width="0.7"/><rect x="109.3" y="3.5999999999999996" width="0.8" height="2.4" fill="#3a3a3a"/><path d="M106.5 17.5L108.10000000000001 13.5L109.7 16.5L111.10000000000001 13.9L112.9 17.5Z" fill="#555"/><path d="M108.5 14.1L109.5 13.1L110.5 14.1Z" fill="#ddd"/><circle cx="120.60000000000001" cy="4.6" r="2.3" fill="#aaa" stroke="#3a3a3a" stroke-width="0.7"/><path d="M119.30000000000001 5.2L122.4 3.1999999999999997" stroke="#eee" stroke-width="0.7"/><rect x="123.5" y="7.1" width="1" height="1" fill="#222"/><path d="M118.30000000000001 13.3V16.7Q120.9 18.9 123.5 16.7V13.3" fill="#777" stroke="#222" stroke-width="0.8"/><rect x="120.4" y="12.9" width="1" height="5.8" fill="#222"/></svg>
<div style="left:430.00px;top:41.50px;width:198.00px;height:186.50px;background:#aeaeae;"></div>
<div style="left:430.00px;top:34.50px;width:198.00px;height:7.00px;background:linear-gradient(#7a7a7a,#8c8c8c);"></div>
<svg style="left:432.20px;top:34.80px;" width="70" height="7" viewBox="0 0 70 7"><path d="M0 7 L0 1.5 Q0 0 1.5 0 L64 0 Q66 0 67 2 L70 7Z" fill="#aeaeae"/></svg>
<div style="left:437.00px;top:36.00px;width:50.00px;height:5.00px;background:#c4c4c4;box-shadow:0 0 0 0.4px #888;"></div>
<span class="t" style="left:438.30px;top:35.48px;font-size:5.2px;line-height:6.24px;color:#111;transform:scaleX(0.810);">Programm: Sequenz 01</span>
<div style="left:488.30px;top:36.00px;width:4.80px;height:5.00px;background:#c8c8c8;box-shadow:0 0 0 0.4px #666;"></div>
<svg style="left:488.70px;top:37.00px;" width="4" height="3" viewBox="0 0 4 3"><path d="M0.6 0.6H3.4L2 2.5Z" fill="#111"/></svg>
<span class="t" style="left:495.20px;top:35.30px;font-size:5.5px;line-height:6.60px;color:#111;font-weight:bold;">×</span>
<svg style="left:610.00px;top:34.80px;" width="18" height="7" viewBox="0 0 18 7"><path d="M0 7 Q3 7 5 3.5 Q7 0.3 10 0.3 H16.5 Q18 0.3 18 2 V7" fill="#aeaeae"/></svg>
<svg style="left:621.50px;top:36.30px;" width="4.5" height="4" viewBox="0 0 4.5 4"><path d="M0.9 0.4L3.7 2L0.9 3.6Z" fill="#111"/></svg>
<div style="left:434.70px;top:42.30px;width:188.30px;height:141.40px;background:#000;"></div>
<svg style="left:456.70px;top:142.60px;" width="6" height="8.5" viewBox="0 0 7 10"><path d="M0.6 0.4V7.6L2.4 6L3.7 9L4.9 8.5L3.6 5.6H6Z" fill="#f4f4f4" stroke="#111" stroke-width="0.6"/></svg>
<span class="t" style="left:431.00px;top:185.70px;font-size:5px;line-height:6.00px;color:#555;">▾</span>
<span class="t" style="left:436.00px;top:184.14px;font-size:7.6px;line-height:9.12px;color:#2525a8;font-weight:bold;transform:scaleX(0.761);text-decoration:underline;text-decoration-thickness:0.5px;text-underline-offset:0.6px;text-decoration-color:#7474c4;">00:06:06:24</span>
<div style="left:513.50px;top:186.00px;width:25.00px;height:6.50px;background:#c6c6c6;box-shadow:0 0 0 0.5px #777;"></div>
<span class="t" style="left:515.50px;top:186.20px;font-size:5px;line-height:6.00px;color:#111;transform:scaleX(0.857);">Einpassen</span>
<div style="left:539.00px;top:186.00px;width:5.50px;height:6.50px;background:#c6c6c6;box-shadow:0 0 0 0.5px #666;"></div>
<svg style="left:539.70px;top:187.50px;" width="4.2" height="3.5" viewBox="0 0 4.2 3.5"><path d="M0.5 0.6H3.7L2.1 3Z" fill="#111"/></svg>
<span class="t" style="left:587.00px;top:184.14px;font-size:7.6px;line-height:9.12px;color:#111;font-weight:bold;transform:scaleX(0.761);">00:03:03:12</span>
<div style="left:623.00px;top:187.50px;width:3.00px;height:3.00px;background:#ddd;border-radius:50%;box-shadow:0 0 0 0.4px #666;"></div>
<div style="left:431.50px;top:194.50px;width:195.00px;height:1.60px;background:#d4d4d4;border-radius:1px;box-shadow:0 0.6px 0 #666;"></div>
<div style="left:432.00px;top:193.50px;width:3.00px;height:3.00px;background:#e8e8e8;border-radius:50%;"></div>
<div style="left:624.00px;top:193.50px;width:3.00px;height:3.00px;background:#e8e8e8;border-radius:50%;"></div>
<div style="left:431.50px;top:197.40px;width:195.50px;height:7.40px;background:linear-gradient(#e2e2e2,#d6d6d6);border-radius:1px;box-shadow:0 0.6px 0 #777;"></div>
<svg style="left:431.50px;top:203.10px;" width="195" height="2" viewBox="0 0 195 2"><rect x="0.00" y="0" width="0.6" height="1.5" fill="#fff"/><rect x="3.75" y="0" width="0.6" height="1.5" fill="#fff"/><rect x="7.50" y="0" width="0.6" height="1.5" fill="#fff"/><rect x="11.25" y="0" width="0.6" height="1.5" fill="#fff"/><rect x="15.00" y="0" width="0.6" height="1.5" fill="#fff"/><rect x="18.75" y="0" width="0.6" height="1.5" fill="#fff"/><rect x="22.50" y="0" width="0.6" height="1.5" fill="#fff"/><rect x="26.25" y="0" width="0.6" height="1.5" fill="#fff"/><rect x="30.00" y="0" width="0.6" height="1.5" fill="#fff"/><rect x="33.75" y="0" width="0.6" height="1.5" fill="#fff"/><rect x="37.50" y="0" width="0.6" height="1.5" fill="#fff"/><rect x="41.25" y="0" width="0.6" height="1.5" fill="#fff"/><rect x="45.00" y="0" width="0.6" height="1.5" fill="#fff"/><rect x="48.75" y="0" width="0.6" height="1.5" fill="#fff"/><rect x="52.50" y="0" width="0.6" height="1.5" fill="#fff"/><rect x="56.25" y="0" width="0.6" height="1.5" fill="#fff"/><rect x="60.00" y="0" width="0.6" height="1.5" fill="#fff"/><rect x="63.75" y="0" width="0.6" height="1.5" fill="#fff"/><rect x="67.50" y="0" width="0.6" height="1.5" fill="#fff"/><rect x="71.25" y="0" width="0.6" height="1.5" fill="#fff"/><rect x="75.00" y="0" width="0.6" height="1.5" fill="#fff"/><rect x="78.75" y="0" width="0.6" height="1.5" fill="#fff"/><rect x="82.50" y="0" width="0.6" height="1.5" fill="#fff"/><rect x="86.25" y="0" width="0.6" height="1.5" fill="#fff"/><rect x="90.00" y="0" width="0.6" height="1.5" fill="#fff"/><rect x="93.75" y="0" width="0.6" height="1.5" fill="#fff"/><rect x="97.50" y="0" width="0.6" height="1.5" fill="#fff"/><rect x="101.25" y="0" width="0.6" height="1.5" fill="#fff"/><rect x="105.00" y="0" width="0.6" height="1.5" fill="#fff"/><rect x="108.75" y="0" width="0.6" height="1.5" fill="#fff"/><rect x="112.50" y="0" width="0.6" height="1.5" fill="#fff"/><rect x="116.25" y="0" width="0.6" height="1.5" fill="#fff"/><rect x="120.00" y="0" width="0.6" height="1.5" fill="#fff"/><rect x="123.75" y="0" width="0.6" height="1.5" fill="#fff"/><rect x="127.50" y="0" width="0.6" height="1.5" fill="#fff"/><rect x="131.25" y="0" width="0.6" height="1.5" fill="#fff"/><rect x="135.00" y="0" width="0.6" height="1.5" fill="#fff"/><rect x="138.75" y="0" width="0.6" height="1.5" fill="#fff"/><rect x="142.50" y="0" width="0.6" height="1.5" fill="#fff"/><rect x="146.25" y="0" width="0.6" height="1.5" fill="#fff"/><rect x="150.00" y="0" width="0.6" height="1.5" fill="#fff"/><rect x="153.75" y="0" width="0.6" height="1.5" fill="#fff"/><rect x="157.50" y="0" width="0.6" height="1.5" fill="#fff"/><rect x="161.25" y="0" width="0.6" height="1.5" fill="#fff"/><rect x="165.00" y="0" width="0.6" height="1.5" fill="#fff"/><rect x="168.75" y="0" width="0.6" height="1.5" fill="#fff"/><rect x="172.50" y="0" width="0.6" height="1.5" fill="#fff"/><rect x="176.25" y="0" width="0.6" height="1.5" fill="#fff"/><rect x="180.00" y="0" width="0.6" height="1.5" fill="#fff"/><rect x="183.75" y="0" width="0.6" height="1.5" fill="#fff"/><rect x="187.50" y="0" width="0.6" height="1.5" fill="#fff"/><rect x="191.25" y="0" width="0.6" height="1.5" fill="#fff"/><rect x="195.00" y="0" width="0.6" height="1.5" fill="#fff"/></svg>
<span class="t" style="left:431.50px;top:197.00px;font-size:5px;line-height:6.00px;color:#222;transform:scaleX(0.999);">00:00</span>
<span class="t" style="left:493.00px;top:197.00px;font-size:5px;line-height:6.00px;color:#222;transform:scaleX(0.947);">00:05:00:00</span>
<span class="t" style="left:568.00px;top:197.00px;font-size:5px;line-height:6.00px;color:#222;transform:scaleX(0.947);">00:10:00:00</span>
<svg style="left:520.50px;top:198.80px;" width="6" height="6.5" viewBox="0 0 6 6.5"><path d="M0.4 0.4H5.6V2.5L3 6L0.4 2.5Z" fill="#4a90e0" stroke="#1a4aa0" stroke-width="0.4"/></svg>
<svg style="left:465.70px;top:206.80px;" width="128" height="20" viewBox="0 0 128 20"><rect x="0" y="0" width="34.3" height="19.7" fill="#a7a7a7"/><rect x="93.3" y="0" width="33.7" height="19.7" fill="#a7a7a7"/><path d="M6.2 2.4Q5.2 2.4 5.2 3.5999999999999996Q5.2 4.8 4.3 4.8Q5.2 4.8 5.2 6.0Q5.2 7.199999999999999 6.2 7.199999999999999" stroke="#4a4a4a" stroke-width="0.75" fill="none" stroke-linecap="round" stroke-linejoin="round"/><path d="M16.400000000000002 2.4Q17.400000000000002 2.4 17.400000000000002 3.5999999999999996Q17.400000000000002 4.8 18.3 4.8Q17.400000000000002 4.8 17.400000000000002 6.0Q17.400000000000002 7.199999999999999 16.400000000000002 7.199999999999999" stroke="#4a4a4a" stroke-width="0.75" fill="none" stroke-linecap="round" stroke-linejoin="round"/><path d="M25.6 2.4H29.6V5L27.6 7.6L25.6 5Z" fill="#ececec" stroke="#bbb" stroke-width="0.3"/><path d="M5.1000000000000005 13.1Q4.1000000000000005 13.1 4.1000000000000005 14.3Q4.1000000000000005 15.5 3.2 15.5Q4.1000000000000005 15.5 4.1000000000000005 16.7Q4.1000000000000005 17.9 5.1000000000000005 17.9" stroke="#4a4a4a" stroke-width="0.75" fill="none" stroke-linecap="round" stroke-linejoin="round"/><path d="M9 15.5H5.5M6.9 14.4L5.5 15.5L6.9 16.6" stroke="#4a4a4a" stroke-width="0.75" fill="none" stroke-linecap="round" stroke-linejoin="round"/><path d="M14.6 15.5H18.2M16.8 14.4L18.2 15.5L16.8 16.6" stroke="#4a4a4a" stroke-width="0.75" fill="none" stroke-linecap="round" stroke-linejoin="round"/><path d="M18.700000000000003 13.1Q19.700000000000003 13.1 19.700000000000003 14.3Q19.700000000000003 15.5 20.6 15.5Q19.700000000000003 15.5 19.700000000000003 16.7Q19.700000000000003 17.9 18.700000000000003 17.9" stroke="#4a4a4a" stroke-width="0.75" fill="none" stroke-linecap="round" stroke-linejoin="round"/><path d="M25.9 13.1Q24.9 13.1 24.9 14.3Q24.9 15.5 24 15.5Q24.9 15.5 24.9 16.7Q24.9 17.9 25.9 17.9" stroke="#4a4a4a" stroke-width="0.75" fill="none" stroke-linecap="round" stroke-linejoin="round"/><path d="M26.6 14.0L29.6 15.5L26.6 17.0Z" fill="#4a4a4a"/><path d="M30.5 13.1Q31.5 13.1 31.5 14.3Q31.5 15.5 32.4 15.5Q31.5 15.5 31.5 16.7Q31.5 17.9 30.5 17.9" stroke="#4a4a4a" stroke-width="0.75" fill="none" stroke-linecap="round" stroke-linejoin="round"/><path d="M39.699999999999996 2.4Q38.699999999999996 2.4 38.699999999999996 3.5999999999999996Q38.699999999999996 4.8 37.8 4.8Q38.699999999999996 4.8 38.699999999999996 6.0Q38.699999999999996 7.199999999999999 39.699999999999996 7.199999999999999" stroke="#4a4a4a" stroke-width="0.75" fill="none" stroke-linecap="round" stroke-linejoin="round"/><path d="M44 4.8H40.2M41.6 3.6999999999999997L40.2 4.8L41.6 5.9" stroke="#4a4a4a" stroke-width="0.75" fill="none" stroke-linecap="round" stroke-linejoin="round"/><path d="M53.2 2.5999999999999996L49.4 4.8L53.2 7.0Z" fill="#444"/><rect x="53.8" y="2.5999999999999996" width="1.3" height="4.4" fill="#444"/><path d="M62.4 2.1999999999999997L67 4.8L62.4 7.4Z" fill="#333"/><path d="M73.6 2.5999999999999996L77.4 4.8L73.6 7.0Z" fill="#444"/><rect x="71.7" y="2.5999999999999996" width="1.3" height="4.4" fill="#444"/><path d="M82.4 4.8H86.2M84.8 3.6999999999999997L86.2 4.8L84.8 5.9" stroke="#4a4a4a" stroke-width="0.75" fill="none" stroke-linecap="round" stroke-linejoin="round"/><path d="M86.69999999999999 2.4Q87.69999999999999 2.4 87.69999999999999 3.5999999999999996Q87.69999999999999 4.8 88.6 4.8Q87.69999999999999 4.8 87.69999999999999 6.0Q87.69999999999999 7.199999999999999 86.69999999999999 7.199999999999999" stroke="#4a4a4a" stroke-width="0.75" fill="none" stroke-linecap="round" stroke-linejoin="round"/><rect x="40.8" y="11.3" width="45.5" height="1.5" rx="0.7" fill="#d0d0d0"/><rect x="40.8" y="10.8" width="45.5" height="0.6" fill="#888"/><rect x="58.5" y="10.1" width="10.4" height="3.6" rx="1" fill="#f4f4f4" stroke="#666" stroke-width="0.4"/><rect x="58.9" y="10.3" width="9.6" height="1.2" fill="#888"/><rect x="40.8" y="16.3" width="45.5" height="3" rx="0.6" fill="#9c9c9c"/><rect x="41.30" y="16.7" width="1.3" height="2.3" fill="#e6e6e6" opacity="0.69"/><rect x="43.45" y="16.7" width="1.3" height="2.3" fill="#e6e6e6" opacity="0.75"/><rect x="45.60" y="16.7" width="1.3" height="2.3" fill="#e6e6e6" opacity="0.81"/><rect x="47.75" y="16.7" width="1.3" height="2.3" fill="#e6e6e6" opacity="0.88"/><rect x="49.90" y="16.7" width="1.3" height="2.3" fill="#e6e6e6" opacity="0.94"/><rect x="52.05" y="16.7" width="1.3" height="2.3" fill="#e6e6e6" opacity="1.00"/><rect x="54.20" y="16.7" width="1.3" height="2.3" fill="#e6e6e6" opacity="0.94"/><rect x="56.35" y="16.7" width="1.3" height="2.3" fill="#e6e6e6" opacity="0.88"/><rect x="58.50" y="16.7" width="1.3" height="2.3" fill="#e6e6e6" opacity="0.81"/><rect x="60.65" y="16.7" width="1.3" height="2.3" fill="#e6e6e6" opacity="0.75"/><rect x="62.80" y="16.7" width="1.3" height="2.3" fill="#e6e6e6" opacity="0.69"/><rect x="64.95" y="16.7" width="1.3" height="2.3" fill="#e6e6e6" opacity="0.62"/><rect x="67.10" y="16.7" width="1.3" height="2.3" fill="#e6e6e6" opacity="0.56"/><rect x="69.25" y="16.7" width="1.3" height="2.3" fill="#e6e6e6" opacity="0.50"/><rect x="71.40" y="16.7" width="1.3" height="2.3" fill="#e6e6e6" opacity="0.44"/><rect x="73.55" y="16.7" width="1.3" height="2.3" fill="#e6e6e6" opacity="0.38"/><rect x="75.70" y="16.7" width="1.3" height="2.3" fill="#e6e6e6" opacity="0.31"/><rect x="77.85" y="16.7" width="1.3" height="2.3" fill="#e6e6e6" opacity="0.25"/><rect x="80.00" y="16.7" width="1.3" height="2.3" fill="#e6e6e6" opacity="0.25"/><rect x="82.15" y="16.7" width="1.3" height="2.3" fill="#e6e6e6" opacity="0.25"/><rect x="84.30" y="16.7" width="1.3" height="2.3" fill="#e6e6e6" opacity="0.25"/><rect x="96.10000000000001" y="3.4" width="5.6" height="3.2" rx="0.8" fill="#888" stroke="#3a3a3a" stroke-width="0.7"/><rect x="97.60000000000001" y="2.3" width="2.6" height="1.2" fill="#3a3a3a"/><path d="M95.7 17.5L97.30000000000001 13.5L98.9 16.5L100.30000000000001 13.9L102.10000000000001 17.5Z" fill="#555"/><path d="M97.7 14.1L98.7 13.1L99.7 14.1Z" fill="#ddd"/><rect x="99.9" y="14.9" width="2.2" height="2.4" fill="#222"/><rect x="106.9" y="2.8" width="5.6" height="4" rx="0.9" fill="#ccc" stroke="#3a3a3a" stroke-width="0.7"/><rect x="109.3" y="3.5999999999999996" width="0.8" height="2.4" fill="#3a3a3a"/><path d="M106.5 17.5L108.10000000000001 13.5L109.7 16.5L111.10000000000001 13.9L112.9 17.5Z" fill="#555"/><path d="M108.5 14.1L109.5 13.1L110.5 14.1Z" fill="#ddd"/><circle cx="120.60000000000001" cy="4.6" r="2.3" fill="#aaa" stroke="#3a3a3a" stroke-width="0.7"/><path d="M119.30000000000001 5.2L122.4 3.1999999999999997" stroke="#eee" stroke-width="0.7"/><rect x="123.5" y="7.1" width="1" height="1" fill="#222"/><path d="M118.30000000000001 13.3V16.7Q120.9 18.9 123.5 16.7V13.3" fill="#777" stroke="#222" stroke-width="0.8"/><rect x="120.4" y="12.9" width="1" height="5.8" fill="#222"/></svg>
<div style="left:223.00px;top:237.50px;width:381.00px;height:158.00px;background:#747474;"></div>
<div style="left:223.00px;top:237.50px;width:381.00px;height:23.50px;background:#a5a5a5;"></div>
<svg style="left:226.00px;top:231.50px;" width="68" height="6.2" viewBox="0 0 68 6.2"><path d="M0 6.2 L0 1.5 Q0 0 1.5 0 L62 0 Q64 0 65 2 L68 6.2Z" fill="#aeaeae"/></svg>
<span class="t" style="left:230.00px;top:231.80px;font-size:5px;line-height:6.00px;color:#222;transform:scaleX(0.899);">Schnittfenster: Sequenz 01</span>
<span class="t" style="left:287.50px;top:231.50px;font-size:5.5px;line-height:6.60px;color:#111;font-weight:bold;">×</span>
<svg style="left:585.00px;top:231.50px;" width="18.5" height="6.2" viewBox="0 0 18.5 6.2"><path d="M0 6.2 Q4 6.2 6 3 Q8 0 11 0 H18.5 V6.2Z" fill="#a9a9a9"/></svg>
<svg style="left:596.50px;top:232.80px;" width="4.5" height="4" viewBox="0 0 4.5 4"><path d="M0.9 0.4L3.7 2L0.9 3.6Z" fill="#111"/></svg>
<span class="t" style="left:224.00px;top:240.44px;font-size:7.6px;line-height:9.12px;color:#2525a8;font-weight:bold;transform:scaleX(0.773);text-decoration:underline;text-decoration-thickness:0.5px;text-underline-offset:0.6px;text-decoration-color:#7474c4;">00:06:06:24</span>
<div style="left:231.00px;top:251.50px;width:7.50px;height:7.00px;background:#e8e8e8;border-radius:1px;box-shadow:0 0 0 0.4px #888;"></div>
<div style="left:233.00px;top:253.30px;width:4.00px;height:0.60px;background:#555;"></div>
<div style="left:233.00px;top:254.80px;width:4.00px;height:0.60px;background:#555;"></div>
<div style="left:233.00px;top:256.30px;width:4.00px;height:0.60px;background:#555;"></div>
<div style="left:243.00px;top:252.50px;width:3.50px;height:5.00px;background:#d0d0d0;border-radius:50%;opacity:.8;"></div>
<div style="left:252.00px;top:252.50px;width:3.50px;height:5.50px;background:#d8d8d8;border-radius:2px 2px 1px 1px;opacity:.9;"></div>
<div style="left:260.00px;top:251.50px;width:7.50px;height:7.00px;background:#f0f0f0;border-radius:1px;box-shadow:0 0 0 0.4px #888;"></div>
<div style="left:261.00px;top:254.50px;width:5.50px;height:1.00px;background:#666;"></div>
<div style="left:271.00px;top:240.30px;width:293.00px;height:1.70px;background:#cfcfcf;border-radius:1px;box-shadow:0 0.6px 0 #666;"></div>
<div style="left:270.50px;top:239.60px;width:3.00px;height:3.00px;background:#e4e4e4;border-radius:50%;"></div>
<div style="left:562.00px;top:240.20px;width:3.00px;height:3.00px;background:#eee;border-radius:50%;"></div>
<div style="left:270.50px;top:243.50px;width:326.50px;height:10.20px;background:linear-gradient(#e2e2e2,#dadada);"></div>
<div style="left:270.50px;top:253.70px;width:150.50px;height:5.90px;background:linear-gradient(#d0d0e0,#a4a4c4 40%,#8686ae);"></div>
<div style="left:421.00px;top:253.70px;width:176.00px;height:5.90px;background:#848484;"></div>
<svg style="left:418.50px;top:252.50px;" width="5" height="7" viewBox="0 0 5 7"><path d="M0.5 0.5H4.5L2.5 6Z" fill="#ddd" stroke="#888" stroke-width="0.4"/></svg>
<svg style="left:270.50px;top:251.00px;" width="327" height="4" viewBox="0 0 327 4"><rect x="1.20" y="0.4" width="0.7" height="3.2" fill="#fff" opacity="0.8"/><rect x="3.67" y="1.4" width="0.7" height="2.2" fill="#fff" opacity="0.8"/><rect x="6.14" y="1.4" width="0.7" height="2.2" fill="#fff" opacity="0.8"/><rect x="8.61" y="1.4" width="0.7" height="2.2" fill="#fff" opacity="0.8"/><rect x="11.08" y="1.4" width="0.7" height="2.2" fill="#fff" opacity="0.8"/><rect x="13.55" y="0.4" width="0.7" height="3.2" fill="#fff" opacity="0.8"/><rect x="16.02" y="1.4" width="0.7" height="2.2" fill="#fff" opacity="0.8"/><rect x="18.49" y="1.4" width="0.7" height="2.2" fill="#fff" opacity="0.8"/><rect x="20.96" y="1.4" width="0.7" height="2.2" fill="#fff" opacity="0.8"/><rect x="23.43" y="1.4" width="0.7" height="2.2" fill="#fff" opacity="0.8"/><rect x="25.90" y="0.4" width="0.7" height="3.2" fill="#fff" opacity="0.8"/><rect x="28.37" y="1.4" width="0.7" height="2.2" fill="#fff" opacity="0.8"/><rect x="30.84" y="1.4" width="0.7" height="2.2" fill="#fff" opacity="0.8"/><rect x="33.31" y="1.4" width="0.7" height="2.2" fill="#fff" opacity="0.8"/><rect x="35.78" y="1.4" width="0.7" height="2.2" fill="#fff" opacity="0.8"/><rect x="38.25" y="0.4" width="0.7" height="3.2" fill="#fff" opacity="0.8"/><rect x="40.72" y="1.4" width="0.7" height="2.2" fill="#fff" opacity="0.8"/><rect x="43.19" y="1.4" width="0.7" height="2.2" fill="#fff" opacity="0.8"/><rect x="45.66" y="1.4" width="0.7" height="2.2" fill="#fff" opacity="0.8"/><rect x="48.13" y="1.4" width="0.7" height="2.2" fill="#fff" opacity="0.8"/><rect x="50.60" y="0.4" width="0.7" height="3.2" fill="#fff" opacity="0.8"/><rect x="53.07" y="1.4" width="0.7" height="2.2" fill="#fff" opacity="0.8"/><rect x="55.54" y="1.4" width="0.7" height="2.2" fill="#fff" opacity="0.8"/><rect x="58.01" y="1.4" width="0.7" height="2.2" fill="#fff" opacity="0.8"/><rect x="60.48" y="1.4" width="0.7" height="2.2" fill="#fff" opacity="0.8"/><rect x="62.95" y="0.4" width="0.7" height="3.2" fill="#fff" opacity="0.8"/><rect x="65.42" y="1.4" width="0.7" height="2.2" fill="#fff" opacity="0.8"/><rect x="67.89" y="1.4" width="0.7" height="2.2" fill="#fff" opacity="0.8"/><rect x="70.36" y="1.4" width="0.7" height="2.2" fill="#fff" opacity="0.8"/><rect x="72.83" y="1.4" width="0.7" height="2.2" fill="#fff" opacity="0.8"/><rect x="75.30" y="0.4" width="0.7" height="3.2" fill="#fff" opacity="0.8"/><rect x="77.77" y="1.4" width="0.7" height="2.2" fill="#fff" opacity="0.8"/><rect x="80.24" y="1.4" width="0.7" height="2.2" fill="#fff" opacity="0.8"/><rect x="82.71" y="1.4" width="0.7" height="2.2" fill="#fff" opacity="0.8"/><rect x="85.18" y="1.4" width="0.7" height="2.2" fill="#fff" opacity="0.8"/><rect x="87.65" y="0.4" width="0.7" height="3.2" fill="#fff" opacity="0.8"/><rect x="90.12" y="1.4" width="0.7" height="2.2" fill="#fff" opacity="0.8"/><rect x="92.59" y="1.4" width="0.7" height="2.2" fill="#fff" opacity="0.8"/><rect x="95.06" y="1.4" width="0.7" height="2.2" fill="#fff" opacity="0.8"/><rect x="97.53" y="1.4" width="0.7" height="2.2" fill="#fff" opacity="0.8"/><rect x="100.00" y="0.4" width="0.7" height="3.2" fill="#fff" opacity="0.8"/><rect x="102.47" y="1.4" width="0.7" height="2.2" fill="#fff" opacity="0.8"/><rect x="104.94" y="1.4" width="0.7" height="2.2" fill="#fff" opacity="0.8"/><rect x="107.41" y="1.4" width="0.7" height="2.2" fill="#fff" opacity="0.8"/><rect x="109.88" y="1.4" width="0.7" height="2.2" fill="#fff" opacity="0.8"/><rect x="112.35" y="0.4" width="0.7" height="3.2" fill="#fff" opacity="0.8"/><rect x="114.82" y="1.4" width="0.7" height="2.2" fill="#fff" opacity="0.8"/><rect x="117.29" y="1.4" width="0.7" height="2.2" fill="#fff" opacity="0.8"/><rect x="119.76" y="1.4" width="0.7" height="2.2" fill="#fff" opacity="0.8"/><rect x="122.23" y="1.4" width="0.7" height="2.2" fill="#fff" opacity="0.8"/><rect x="124.70" y="0.4" width="0.7" height="3.2" fill="#fff" opacity="0.8"/><rect x="127.17" y="1.4" width="0.7" height="2.2" fill="#fff" opacity="0.8"/><rect x="129.64" y="1.4" width="0.7" height="2.2" fill="#fff" opacity="0.8"/><rect x="132.11" y="1.4" width="0.7" height="2.2" fill="#fff" opacity="0.8"/><rect x="134.58" y="1.4" width="0.7" height="2.2" fill="#fff" opacity="0.8"/><rect x="137.05" y="0.4" width="0.7" height="3.2" fill="#fff" opacity="0.8"/><rect x="139.52" y="1.4" width="0.7" height="2.2" fill="#fff" opacity="0.8"/><rect x="141.99" y="1.4" width="0.7" height="2.2" fill="#fff" opacity="0.8"/><rect x="144.46" y="1.4" width="0.7" height="2.2" fill="#fff" opacity="0.8"/><rect x="146.93" y="1.4" width="0.7" height="2.2" fill="#fff" opacity="0.8"/><rect x="149.40" y="0.4" width="0.7" height="3.2" fill="#fff" opacity="0.8"/><rect x="151.87" y="1.4" width="0.7" height="2.2" fill="#fff" opacity="0.8"/><rect x="154.34" y="1.4" width="0.7" height="2.2" fill="#fff" opacity="0.8"/><rect x="156.81" y="1.4" width="0.7" height="2.2" fill="#fff" opacity="0.8"/><rect x="159.28" y="1.4" width="0.7" height="2.2" fill="#fff" opacity="0.8"/><rect x="161.75" y="0.4" width="0.7" height="3.2" fill="#fff" opacity="0.8"/><rect x="164.22" y="1.4" width="0.7" height="2.2" fill="#fff" opacity="0.8"/><rect x="166.69" y="1.4" width="0.7" height="2.2" fill="#fff" opacity="0.8"/><rect x="169.16" y="1.4" width="0.7" height="2.2" fill="#fff" opacity="0.8"/><rect x="171.63" y="1.4" width="0.7" height="2.2" fill="#fff" opacity="0.8"/><rect x="174.10" y="0.4" width="0.7" height="3.2" fill="#fff" opacity="0.8"/><rect x="176.57" y="1.4" width="0.7" height="2.2" fill="#fff" opacity="0.8"/><rect x="179.04" y="1.4" width="0.7" height="2.2" fill="#fff" opacity="0.8"/><rect x="181.51" y="1.4" width="0.7" height="2.2" fill="#fff" opacity="0.8"/><rect x="183.98" y="1.4" width="0.7" height="2.2" fill="#fff" opacity="0.8"/><rect x="186.45" y="0.4" width="0.7" height="3.2" fill="#fff" opacity="0.8"/><rect x="188.92" y="1.4" width="0.7" height="2.2" fill="#fff" opacity="0.8"/><rect x="191.39" y="1.4" width="0.7" height="2.2" fill="#fff" opacity="0.8"/><rect x="193.86" y="1.4" width="0.7" height="2.2" fill="#fff" opacity="0.8"/><rect x="196.33" y="1.4" width="0.7" height="2.2" fill="#fff" opacity="0.8"/><rect x="198.80" y="0.4" width="0.7" height="3.2" fill="#fff" opacity="0.8"/><rect x="201.27" y="1.4" width="0.7" height="2.2" fill="#fff" opacity="0.8"/><rect x="203.74" y="1.4" width="0.7" height="2.2" fill="#fff" opacity="0.8"/><rect x="206.21" y="1.4" width="0.7" height="2.2" fill="#fff" opacity="0.8"/><rect x="208.68" y="1.4" width="0.7" height="2.2" fill="#fff" opacity="0.8"/><rect x="211.15" y="0.4" width="0.7" height="3.2" fill="#fff" opacity="0.8"/><rect x="213.62" y="1.4" width="0.7" height="2.2" fill="#fff" opacity="0.8"/><rect x="216.09" y="1.4" width="0.7" height="2.2" fill="#fff" opacity="0.8"/><rect x="218.56" y="1.4" width="0.7" height="2.2" fill="#fff" opacity="0.8"/><rect x="221.03" y="1.4" width="0.7" height="2.2" fill="#fff" opacity="0.8"/><rect x="223.50" y="0.4" width="0.7" height="3.2" fill="#fff" opacity="0.8"/><rect x="225.97" y="1.4" width="0.7" height="2.2" fill="#fff" opacity="0.8"/><rect x="228.44" y="1.4" width="0.7" height="2.2" fill="#fff" opacity="0.8"/><rect x="230.91" y="1.4" width="0.7" height="2.2" fill="#fff" opacity="0.8"/><rect x="233.38" y="1.4" width="0.7" height="2.2" fill="#fff" opacity="0.8"/><rect x="235.85" y="0.4" width="0.7" height="3.2" fill="#fff" opacity="0.8"/><rect x="238.32" y="1.4" width="0.7" height="2.2" fill="#fff" opacity="0.8"/><rect x="240.79" y="1.4" width="0.7" height="2.2" fill="#fff" opacity="0.8"/><rect x="243.26" y="1.4" width="0.7" height="2.2" fill="#fff" opacity="0.8"/><rect x="245.73" y="1.4" width="0.7" height="2.2" fill="#fff" opacity="0.8"/><rect x="248.20" y="0.4" width="0.7" height="3.2" fill="#fff" opacity="0.8"/><rect x="250.67" y="1.4" width="0.7" height="2.2" fill="#fff" opacity="0.8"/><rect x="253.14" y="1.4" width="0.7" height="2.2" fill="#fff" opacity="0.8"/><rect x="255.61" y="1.4" width="0.7" height="2.2" fill="#fff" opacity="0.8"/><rect x="258.08" y="1.4" width="0.7" height="2.2" fill="#fff" opacity="0.8"/><rect x="260.55" y="0.4" width="0.7" height="3.2" fill="#fff" opacity="0.8"/><rect x="263.02" y="1.4" width="0.7" height="2.2" fill="#fff" opacity="0.8"/><rect x="265.49" y="1.4" width="0.7" height="2.2" fill="#fff" opacity="0.8"/><rect x="267.96" y="1.4" width="0.7" height="2.2" fill="#fff" opacity="0.8"/><rect x="270.43" y="1.4" width="0.7" height="2.2" fill="#fff" opacity="0.8"/><rect x="272.90" y="0.4" width="0.7" height="3.2" fill="#fff" opacity="0.8"/><rect x="275.37" y="1.4" width="0.7" height="2.2" fill="#fff" opacity="0.8"/><rect x="277.84" y="1.4" width="0.7" height="2.2" fill="#fff" opacity="0.8"/><rect x="280.31" y="1.4" width="0.7" height="2.2" fill="#fff" opacity="0.8"/><rect x="282.78" y="1.4" width="0.7" height="2.2" fill="#fff" opacity="0.8"/><rect x="285.25" y="0.4" width="0.7" height="3.2" fill="#fff" opacity="0.8"/><rect x="287.72" y="1.4" width="0.7" height="2.2" fill="#fff" opacity="0.8"/><rect x="290.19" y="1.4" width="0.7" height="2.2" fill="#fff" opacity="0.8"/><rect x="292.66" y="1.4" width="0.7" height="2.2" fill="#fff" opacity="0.8"/><rect x="295.13" y="1.4" width="0.7" height="2.2" fill="#fff" opacity="0.8"/><rect x="297.60" y="0.4" width="0.7" height="3.2" fill="#fff" opacity="0.8"/><rect x="300.07" y="1.4" width="0.7" height="2.2" fill="#fff" opacity="0.8"/><rect x="302.54" y="1.4" width="0.7" height="2.2" fill="#fff" opacity="0.8"/><rect x="305.01" y="1.4" width="0.7" height="2.2" fill="#fff" opacity="0.8"/><rect x="307.48" y="1.4" width="0.7" height="2.2" fill="#fff" opacity="0.8"/><rect x="309.95" y="0.4" width="0.7" height="3.2" fill="#fff" opacity="0.8"/><rect x="312.42" y="1.4" width="0.7" height="2.2" fill="#fff" opacity="0.8"/><rect x="314.89" y="1.4" width="0.7" height="2.2" fill="#fff" opacity="0.8"/><rect x="317.36" y="1.4" width="0.7" height="2.2" fill="#fff" opacity="0.8"/><rect x="319.83" y="1.4" width="0.7" height="2.2" fill="#fff" opacity="0.8"/><rect x="322.30" y="0.4" width="0.7" height="3.2" fill="#fff" opacity="0.8"/><rect x="324.77" y="1.4" width="0.7" height="2.2" fill="#fff" opacity="0.8"/></svg>
<div style="left:270.50px;top:259.60px;width:150.50px;height:1.70px;background:#d24432;"></div>
<div style="left:421.00px;top:260.10px;width:176.00px;height:0.70px;background:#8e8e8e;"></div>
<span class="t" style="left:271.50px;top:243.80px;font-size:5px;line-height:6.00px;color:#222;transform:scaleX(0.919);">00:00</span>
<span class="t" style="left:307.40px;top:243.80px;font-size:5px;line-height:6.00px;color:#222;transform:scaleX(0.924);">00:01:00:00</span>
<span class="t" style="left:356.80px;top:243.80px;font-size:5px;line-height:6.00px;color:#222;transform:scaleX(0.924);">00:02:00:00</span>
<span class="t" style="left:406.20px;top:243.80px;font-size:5px;line-height:6.00px;color:#222;transform:scaleX(0.924);">00:03:00:00</span>
<span class="t" style="left:455.60px;top:243.80px;font-size:5px;line-height:6.00px;color:#222;transform:scaleX(0.924);">00:04:00:00</span>
<span class="t" style="left:505.00px;top:243.80px;font-size:5px;line-height:6.00px;color:#222;transform:scaleX(0.924);">00:05:00:00</span>
<span class="t" style="left:554.40px;top:243.80px;font-size:5px;line-height:6.00px;color:#222;transform:scaleX(0.924);">00:06:00:00</span>
<svg style="left:569.00px;top:247.80px;" width="6" height="7" viewBox="0 0 6 7"><path d="M0.5 0.5H5.5V3L3 6.5L0.5 3Z" fill="#4a90e0" stroke="#1a4aa0" stroke-width="0.4"/></svg>
<svg style="left:269.00px;top:253.50px;" width="4" height="6" viewBox="0 0 4 6"><path d="M0.4 0.4H3.2V3L1.8 5.4L0.4 3Z" fill="#4a90e0" stroke="#1a4aa0" stroke-width="0.4"/></svg>
<div style="left:223.50px;top:284.30px;width:47.00px;height:10.20px;background:#8f8f8f;"></div>
<div style="left:270.50px;top:284.30px;width:326.50px;height:10.20px;background:#8a8a8a;"></div>
<div style="left:223.50px;top:294.00px;width:373.50px;height:0.70px;background:#6a6a6a;"></div>
<svg style="left:226.80px;top:286.90px;" width="6" height="5" viewBox="0 0 6 5"><path d="M0.3 2.4Q3 -0.8 5.7 2.4Q3 5.4 0.3 2.4Z" fill="#151515"/><path d="M1.6 1.6Q3 0.9 4.4 1.6" stroke="#888" stroke-width="0.4" fill="none"/></svg>
<div style="left:234.50px;top:286.30px;width:5.50px;height:6.00px;background:#9c9c9c;box-shadow:0 0 0 0.3px #999;"></div>
<svg style="left:243.00px;top:286.90px;" width="4" height="5" viewBox="0 0 4 5"><path d="M0.6 0.5L3.4 2.5L0.6 4.5Z" fill="#ddd" stroke="#444" stroke-width="0.5"/></svg>
<span class="t" style="left:248.30px;top:286.18px;font-size:5.2px;line-height:6.24px;color:#1a1a1a;transform:scaleX(0.800);">Video 3</span>
<div style="left:223.50px;top:294.50px;width:47.00px;height:10.30px;background:#8f8f8f;"></div>
<div style="left:270.50px;top:294.50px;width:326.50px;height:10.30px;background:#8a8a8a;"></div>
<div style="left:223.50px;top:304.30px;width:373.50px;height:0.70px;background:#6a6a6a;"></div>
<svg style="left:226.80px;top:297.10px;" width="6" height="5" viewBox="0 0 6 5"><path d="M0.3 2.4Q3 -0.8 5.7 2.4Q3 5.4 0.3 2.4Z" fill="#151515"/><path d="M1.6 1.6Q3 0.9 4.4 1.6" stroke="#888" stroke-width="0.4" fill="none"/></svg>
<div style="left:234.50px;top:296.50px;width:5.50px;height:6.00px;background:#9c9c9c;box-shadow:0 0 0 0.3px #999;"></div>
<svg style="left:243.00px;top:297.10px;" width="4" height="5" viewBox="0 0 4 5"><path d="M0.6 0.5L3.4 2.5L0.6 4.5Z" fill="#ddd" stroke="#444" stroke-width="0.5"/></svg>
<span class="t" style="left:248.30px;top:296.38px;font-size:5.2px;line-height:6.24px;color:#1a1a1a;transform:scaleX(0.800);">Video 2</span>
<div style="left:223.50px;top:304.80px;width:47.00px;height:18.70px;background:linear-gradient(#c8c8c8,#d2d2d2);border-radius:2.5px 0 0 2.5px;"></div>
<div style="left:270.50px;top:304.80px;width:326.50px;height:18.70px;background:#959595;"></div>
<div style="left:223.50px;top:323.00px;width:373.50px;height:0.70px;background:#6a6a6a;"></div>
<svg style="left:226.80px;top:307.40px;" width="6" height="5" viewBox="0 0 6 5"><path d="M0.3 2.4Q3 -0.8 5.7 2.4Q3 5.4 0.3 2.4Z" fill="#151515"/><path d="M1.6 1.6Q3 0.9 4.4 1.6" stroke="#888" stroke-width="0.4" fill="none"/></svg>
<div style="left:234.50px;top:306.80px;width:5.50px;height:6.00px;background:#d8d8d8;box-shadow:0 0 0 0.3px #aaa;"></div>
<svg style="left:242.50px;top:308.30px;" width="5" height="4" viewBox="0 0 5 4"><path d="M0.5 0.6H4.5L2.5 3.5Z" fill="#ddd" stroke="#444" stroke-width="0.5"/></svg>
<span class="t" style="left:248.30px;top:306.68px;font-size:5.2px;line-height:6.24px;color:#1a1a1a;transform:scaleX(0.800);">Video 1</span>
<div style="left:223.50px;top:324.20px;width:47.00px;height:19.10px;background:linear-gradient(#c8c8c8,#d2d2d2);border-radius:2.5px 0 0 2.5px;"></div>
<div style="left:270.50px;top:324.20px;width:326.50px;height:19.10px;background:#959595;"></div>
<div style="left:223.50px;top:342.80px;width:373.50px;height:0.70px;background:#6a6a6a;"></div>
<svg style="left:227.00px;top:326.80px;" width="5.5" height="5" viewBox="0 0 5.5 5"><path d="M0.4 1.6H1.8L3.4 0.3V4.5L1.8 3.2H0.4Z" fill="#ddd" stroke="#333" stroke-width="0.5"/><path d="M4.2 1.2Q5.2 2.4 4.2 3.6" stroke="#333" stroke-width="0.5" fill="none"/></svg>
<div style="left:234.50px;top:326.20px;width:5.50px;height:6.00px;background:#d8d8d8;box-shadow:0 0 0 0.3px #aaa;"></div>
<svg style="left:242.50px;top:327.70px;" width="5" height="4" viewBox="0 0 5 4"><path d="M0.5 0.6H4.5L2.5 3.5Z" fill="#ddd" stroke="#444" stroke-width="0.5"/></svg>
<span class="t" style="left:248.30px;top:326.08px;font-size:5.2px;line-height:6.24px;color:#1a1a1a;transform:scaleX(0.800);">Audio 1</span>
<svg style="left:264.50px;top:326.20px;" width="5" height="4" viewBox="0 0 5 4"><path d="M0.5 3.2L2.5 0.8L4.5 3.2M0.5 0.8H4.5" stroke="#555" stroke-width="0.5" fill="none"/></svg>
<div style="left:223.50px;top:343.30px;width:47.00px;height:10.20px;background:#8f8f8f;"></div>
<div style="left:270.50px;top:343.30px;width:326.50px;height:10.20px;background:#8a8a8a;"></div>
<div style="left:223.50px;top:353.00px;width:373.50px;height:0.70px;background:#6a6a6a;"></div>
<svg style="left:227.00px;top:345.90px;" width="5.5" height="5" viewBox="0 0 5.5 5"><path d="M0.4 1.6H1.8L3.4 0.3V4.5L1.8 3.2H0.4Z" fill="#ddd" stroke="#333" stroke-width="0.5"/><path d="M4.2 1.2Q5.2 2.4 4.2 3.6" stroke="#333" stroke-width="0.5" fill="none"/></svg>
<div style="left:234.50px;top:345.30px;width:5.50px;height:6.00px;background:#9c9c9c;box-shadow:0 0 0 0.3px #999;"></div>
<svg style="left:243.00px;top:345.90px;" width="4" height="5" viewBox="0 0 4 5"><path d="M0.6 0.5L3.4 2.5L0.6 4.5Z" fill="#ddd" stroke="#444" stroke-width="0.5"/></svg>
<span class="t" style="left:248.30px;top:345.18px;font-size:5.2px;line-height:6.24px;color:#1a1a1a;transform:scaleX(0.800);">Audio 2</span>
<svg style="left:264.50px;top:345.30px;" width="5" height="4" viewBox="0 0 5 4"><path d="M0.5 3.2L2.5 0.8L4.5 3.2M0.5 0.8H4.5" stroke="#555" stroke-width="0.5" fill="none"/></svg>
<div style="left:223.50px;top:353.50px;width:47.00px;height:10.30px;background:#8f8f8f;"></div>
<div style="left:270.50px;top:353.50px;width:326.50px;height:10.30px;background:#8a8a8a;"></div>
<div style="left:223.50px;top:363.30px;width:373.50px;height:0.70px;background:#6a6a6a;"></div>
<svg style="left:227.00px;top:356.10px;" width="5.5" height="5" viewBox="0 0 5.5 5"><path d="M0.4 1.6H1.8L3.4 0.3V4.5L1.8 3.2H0.4Z" fill="#ddd" stroke="#333" stroke-width="0.5"/><path d="M4.2 1.2Q5.2 2.4 4.2 3.6" stroke="#333" stroke-width="0.5" fill="none"/></svg>
<div style="left:234.50px;top:355.50px;width:5.50px;height:6.00px;background:#9c9c9c;box-shadow:0 0 0 0.3px #999;"></div>
<svg style="left:243.00px;top:356.10px;" width="4" height="5" viewBox="0 0 4 5"><path d="M0.6 0.5L3.4 2.5L0.6 4.5Z" fill="#ddd" stroke="#444" stroke-width="0.5"/></svg>
<span class="t" style="left:248.30px;top:355.38px;font-size:5.2px;line-height:6.24px;color:#1a1a1a;transform:scaleX(0.800);">Audio 3</span>
<svg style="left:264.50px;top:355.50px;" width="5" height="4" viewBox="0 0 5 4"><path d="M0.5 3.2L2.5 0.8L4.5 3.2M0.5 0.8H4.5" stroke="#555" stroke-width="0.5" fill="none"/></svg>
<div style="left:223.50px;top:363.80px;width:47.00px;height:10.20px;background:#8f8f8f;"></div>
<div style="left:270.50px;top:363.80px;width:326.50px;height:10.20px;background:#8a8a8a;"></div>
<div style="left:223.50px;top:373.50px;width:373.50px;height:0.70px;background:#6a6a6a;"></div>
<div style="left:234.50px;top:365.80px;width:5.50px;height:6.00px;background:#9c9c9c;box-shadow:0 0 0 0.3px #999;"></div>
<svg style="left:243.00px;top:366.40px;" width="4" height="5" viewBox="0 0 4 5"><path d="M0.6 0.5L3.4 2.5L0.6 4.5Z" fill="#ddd" stroke="#444" stroke-width="0.5"/></svg>
<span class="t" style="left:248.30px;top:365.68px;font-size:5.2px;line-height:6.24px;color:#1a1a1a;transform:scaleX(0.800);">Master</span>
<svg style="left:264.50px;top:365.80px;" width="5" height="4" viewBox="0 0 5 4"><path d="M0.5 3.2L2.5 0.8L4.5 3.2M0.5 0.8H4.5" stroke="#555" stroke-width="0.5" fill="none"/></svg>
<div style="left:227.00px;top:313.00px;width:4.50px;height:5.00px;background:#eee;border:0.6px solid #333;box-sizing:border-box;"></div>
<div style="left:229.50px;top:315.50px;width:2.50px;height:3.00px;background:#333;"></div>
<svg style="left:235.00px;top:313.50px;" width="5" height="5" viewBox="0 0 5 5"><circle cx="2" cy="2" r="1.4" fill="none" stroke="#333" stroke-width="0.6"/><path d="M3 3L4.6 4.6" stroke="#333" stroke-width="0.8"/></svg>
<svg style="left:245.00px;top:314.00px;" width="4" height="4" viewBox="0 0 4 4"><path d="M3 0.5L1 2L3 3.5Z" fill="#bbb"/></svg>
<svg style="left:251.00px;top:314.00px;" width="4" height="4" viewBox="0 0 4 4"><path d="M0.6 1.8L1.6 3L3.4 0.8" stroke="#bbb" stroke-width="0.7" fill="none"/></svg>
<svg style="left:257.00px;top:314.00px;" width="4" height="4" viewBox="0 0 4 4"><path d="M3 0.5L1 2L3 3.5Z" fill="#bbb"/></svg>
<div style="left:227.00px;top:333.00px;width:4.50px;height:5.00px;background:#eee;border:0.6px solid #333;box-sizing:border-box;"></div>
<div style="left:229.50px;top:335.50px;width:2.50px;height:3.00px;background:#333;"></div>
<svg style="left:235.00px;top:333.50px;" width="5" height="5" viewBox="0 0 5 5"><circle cx="2" cy="2" r="1.4" fill="none" stroke="#333" stroke-width="0.6"/><path d="M3 3L4.6 4.6" stroke="#333" stroke-width="0.8"/></svg>
<svg style="left:245.00px;top:334.00px;" width="4" height="4" viewBox="0 0 4 4"><path d="M3 0.5L1 2L3 3.5Z" fill="#bbb"/></svg>
<svg style="left:251.00px;top:334.00px;" width="4" height="4" viewBox="0 0 4 4"><path d="M0.6 1.8L1.6 3L3.4 0.8" stroke="#bbb" stroke-width="0.7" fill="none"/></svg>
<svg style="left:257.00px;top:334.00px;" width="4" height="4" viewBox="0 0 4 4"><path d="M3 0.5L1 2L3 3.5Z" fill="#bbb"/></svg>
<div style="left:223.00px;top:323.50px;width:47.50px;height:0.80px;background:#747474;"></div>
<div style="left:271.00px;top:305.00px;width:150.00px;height:6.30px;background:#9dc6ba;"></div>
<div style="left:271.00px;top:311.30px;width:150.00px;height:12.00px;background:#b3d9cf;"></div>
<div style="left:271.00px;top:313.90px;width:150.00px;height:0.80px;background:#e6d66a;"></div>
<div style="left:271.40px;top:311.30px;width:15.30px;height:11.60px;background:#0c0c0c;"></div>
<div style="left:271.40px;top:312.90px;width:7.80px;height:8.50px;background:#f2bf27;"></div>
<div style="left:279.20px;top:312.90px;width:7.50px;height:8.50px;background:#fff;"></div>
<span class="t" style="left:272.00px;top:304.90px;font-size:5.5px;line-height:6.60px;color:#1a2a2c;transform:scaleX(0.796);text-decoration:underline;text-decoration-thickness:0.5px;text-underline-offset:0.5px;text-decoration-color:#2f5a52;">Episode 4.avi</span>
<span class="t" style="left:300.00px;top:304.90px;font-size:5.5px;line-height:6.60px;color:#1a2a2c;transform:scaleX(0.833);">[V]</span>
<span class="t" style="left:308.00px;top:305.02px;font-size:5.3px;line-height:6.36px;color:#1a2a2c;transform:scaleX(0.854);">Deckkraft:Deckkraft</span>
<span class="t" style="left:349.00px;top:305.70px;font-size:4.5px;line-height:5.40px;color:#1a2a2c;">▾</span>
<div style="left:271.00px;top:305.00px;width:0.60px;height:18.50px;background:#86b0a4;"></div>
<div style="left:271.00px;top:305.00px;width:1.20px;height:2.00px;background:#3a4a48;"></div>
<div style="left:271.00px;top:324.50px;width:150.00px;height:6.50px;background:#9dc6ba;"></div>
<div style="left:271.00px;top:331.00px;width:150.00px;height:12.20px;background:#b0d9ce;"></div>
<div style="left:271.00px;top:336.70px;width:150.00px;height:0.80px;background:#e6d66a;"></div>
<div style="left:272.00px;top:333.80px;width:149.00px;height:1.00px;background:repeating-linear-gradient(90deg,#86b6a8 0 1.6px,#b0d9ce 1.6px 2.3px,#86b6a8 2.3px 5px,#b0d9ce 5px 6.2px,#86b6a8 6.2px 7px,#b0d9ce 7px 8.1px);opacity:.8;"></div>
<div style="left:272.00px;top:339.90px;width:149.00px;height:1.00px;background:repeating-linear-gradient(90deg,#86b6a8 0 1.6px,#b0d9ce 1.6px 2.3px,#86b6a8 2.3px 5px,#b0d9ce 5px 6.2px,#86b6a8 6.2px 7px,#b0d9ce 7px 8.1px);opacity:.8;"></div>
<span class="t" style="left:272.00px;top:324.70px;font-size:5.5px;line-height:6.60px;color:#1a2a2c;transform:scaleX(0.796);text-decoration:underline;text-decoration-thickness:0.5px;text-underline-offset:0.5px;text-decoration-color:#2f5a52;">Episode 4.avi</span>
<span class="t" style="left:300.00px;top:324.70px;font-size:5.5px;line-height:6.60px;color:#1a2a2c;transform:scaleX(0.833);">[A]</span>
<span class="t" style="left:308.00px;top:324.82px;font-size:5.3px;line-height:6.36px;color:#1a2a2c;transform:scaleX(0.868);">Lautstärke:Tonwertkorrektur</span>
<span class="t" style="left:366.50px;top:325.50px;font-size:4.5px;line-height:5.40px;color:#1a2a2c;">▾</span>
<div style="left:271.00px;top:324.50px;width:0.60px;height:18.70px;background:#86b0a4;"></div>
<div style="left:271.00px;top:324.50px;width:1.20px;height:2.00px;background:#3a4a48;"></div>
<div style="left:421.00px;top:305.00px;width:150.50px;height:6.30px;background:#9dc6ba;"></div>
<div style="left:421.00px;top:311.30px;width:150.50px;height:12.00px;background:#b3d9cf;"></div>
<div style="left:421.00px;top:313.90px;width:150.50px;height:0.80px;background:#e6d66a;"></div>
<div style="left:421.40px;top:311.30px;width:15.30px;height:11.60px;background:#0c0c0c;"></div>
<div style="left:421.40px;top:312.90px;width:7.80px;height:8.50px;background:#f2bf27;"></div>
<div style="left:429.20px;top:312.90px;width:7.50px;height:8.50px;background:#fff;"></div>
<span class="t" style="left:422.00px;top:304.90px;font-size:5.5px;line-height:6.60px;color:#1a2a2c;transform:scaleX(0.796);text-decoration:underline;text-decoration-thickness:0.5px;text-underline-offset:0.5px;text-decoration-color:#2f5a52;">Episode 4.avi</span>
<span class="t" style="left:450.00px;top:304.90px;font-size:5.5px;line-height:6.60px;color:#1a2a2c;transform:scaleX(0.833);">[V]</span>
<span class="t" style="left:458.00px;top:305.02px;font-size:5.3px;line-height:6.36px;color:#1a2a2c;transform:scaleX(0.854);">Deckkraft:Deckkraft</span>
<span class="t" style="left:499.00px;top:305.70px;font-size:4.5px;line-height:5.40px;color:#1a2a2c;">▾</span>
<div style="left:421.00px;top:305.00px;width:0.60px;height:18.50px;background:#86b0a4;"></div>
<div style="left:421.00px;top:305.00px;width:1.20px;height:2.00px;background:#3a4a48;"></div>
<div style="left:421.00px;top:324.50px;width:150.50px;height:6.50px;background:#9dc6ba;"></div>
<div style="left:421.00px;top:331.00px;width:150.50px;height:12.20px;background:#b0d9ce;"></div>
<div style="left:421.00px;top:336.70px;width:150.50px;height:0.80px;background:#e6d66a;"></div>
<div style="left:422.00px;top:333.80px;width:149.50px;height:1.00px;background:repeating-linear-gradient(90deg,#86b6a8 0 1.6px,#b0d9ce 1.6px 2.3px,#86b6a8 2.3px 5px,#b0d9ce 5px 6.2px,#86b6a8 6.2px 7px,#b0d9ce 7px 8.1px);opacity:.8;"></div>
<div style="left:422.00px;top:339.90px;width:149.50px;height:1.00px;background:repeating-linear-gradient(90deg,#86b6a8 0 1.6px,#b0d9ce 1.6px 2.3px,#86b6a8 2.3px 5px,#b0d9ce 5px 6.2px,#86b6a8 6.2px 7px,#b0d9ce 7px 8.1px);opacity:.8;"></div>
<span class="t" style="left:422.00px;top:324.70px;font-size:5.5px;line-height:6.60px;color:#1a2a2c;transform:scaleX(0.796);text-decoration:underline;text-decoration-thickness:0.5px;text-underline-offset:0.5px;text-decoration-color:#2f5a52;">Episode 4.avi</span>
<span class="t" style="left:450.00px;top:324.70px;font-size:5.5px;line-height:6.60px;color:#1a2a2c;transform:scaleX(0.833);">[A]</span>
<span class="t" style="left:458.00px;top:324.82px;font-size:5.3px;line-height:6.36px;color:#1a2a2c;transform:scaleX(0.868);">Lautstärke:Tonwertkorrektur</span>
<span class="t" style="left:516.50px;top:325.50px;font-size:4.5px;line-height:5.40px;color:#1a2a2c;">▾</span>
<div style="left:421.00px;top:324.50px;width:0.60px;height:18.70px;background:#86b0a4;"></div>
<div style="left:421.00px;top:324.50px;width:1.20px;height:2.00px;background:#3a4a48;"></div>
<div style="left:571.60px;top:254.00px;width:0.90px;height:133.00px;background:#c27660;"></div>
<div style="left:596.50px;top:237.50px;width:7.00px;height:150.00px;background:#767676;"></div>
<div style="left:596.00px;top:237.50px;width:7.50px;height:23.50px;background:#a3a3a3;"></div>
<div style="left:597.00px;top:261.80px;width:5.80px;height:5.80px;background:#a6a6a6;border-radius:1px;"></div>
<svg style="left:598.00px;top:263.30px;" width="4" height="3" viewBox="0 0 4 3"><path d="M0.6 2.4L2 0.6L3.4 2.4" stroke="#cfcfcf" stroke-width="0.6" fill="none"/></svg>
<div style="left:597.00px;top:317.00px;width:5.80px;height:5.80px;background:#a6a6a6;border-radius:1px;"></div>
<svg style="left:598.00px;top:318.50px;" width="4" height="3" viewBox="0 0 4 3"><path d="M0.6 0.6L2 2.4L3.4 0.6" stroke="#cfcfcf" stroke-width="0.6" fill="none"/></svg>
<div style="left:597.00px;top:325.80px;width:5.80px;height:5.80px;background:#a6a6a6;border-radius:1px;"></div>
<svg style="left:598.00px;top:327.30px;" width="4" height="3" viewBox="0 0 4 3"><path d="M0.6 2.4L2 0.6L3.4 2.4" stroke="#cfcfcf" stroke-width="0.6" fill="none"/></svg>
<div style="left:597.00px;top:381.20px;width:5.80px;height:5.80px;background:#a6a6a6;border-radius:1px;"></div>
<svg style="left:598.00px;top:382.70px;" width="4" height="3" viewBox="0 0 4 3"><path d="M0.6 0.6L2 2.4L3.4 0.6" stroke="#cfcfcf" stroke-width="0.6" fill="none"/></svg>
<div style="left:223.00px;top:387.50px;width:380.50px;height:8.00px;background:#8e8e8e;"></div>
<div style="left:223.00px;top:387.50px;width:47.50px;height:8.00px;background:#a4a4a4;"></div>
<svg style="left:226.00px;top:389.50px;" width="6" height="4" viewBox="0 0 6 4"><path d="M0.5 3.5L2 1L3.5 3.5Z" fill="#666"/></svg>
<div style="left:236.00px;top:391.50px;width:23.00px;height:1.30px;background:#d8d8d8;border-radius:1px;box-shadow:0 0.5px 0 #666;"></div>
<svg style="left:238.00px;top:389.00px;" width="5" height="4" viewBox="0 0 5 4"><path d="M0.5 3.6L2.5 0.5L4.5 3.6Z" fill="#eee" stroke="#666" stroke-width="0.4"/></svg>
<svg style="left:261.00px;top:388.80px;" width="8" height="5" viewBox="0 0 8 5"><path d="M0.5 4.5L2.5 1.5L4 4.5ZM3 4.5L5.5 0.5L7.5 4.5Z" fill="#ccc" stroke="#666" stroke-width="0.4"/></svg>
<div style="left:271.00px;top:388.00px;width:7.00px;height:7.00px;background:#b4b4b4;"></div>
<svg style="left:272.20px;top:389.30px;" width="5" height="4.5" viewBox="0 0 5 4.5"><path d="M3.8 0.4L0.8 2.2L3.8 4Z" fill="#111"/></svg>
<div style="left:278.50px;top:388.00px;width:310.50px;height:7.00px;background:#8a8a8a;"></div>
<div style="left:278.50px;top:388.30px;width:156.50px;height:6.40px;background:linear-gradient(#c8c8c8,#b4b4b4);border-radius:1px;"></div>
<div style="left:589.00px;top:388.00px;width:7.00px;height:7.00px;background:#b4b4b4;"></div>
<svg style="left:590.20px;top:389.30px;" width="5" height="4.5" viewBox="0 0 5 4.5"><path d="M1 0.4L4 2.2L1 4Z" fill="#111"/></svg>
<div style="left:596.00px;top:387.50px;width:7.50px;height:8.00px;background:#9a9a9a;"></div>
<div style="left:606.00px;top:240.00px;width:22.00px;height:68.50px;background:#aeaeae;"></div>
<svg style="left:606.50px;top:233.50px;" width="15" height="6.5" viewBox="0 0 15 6.5"><path d="M0 6.5 L0 1.5 Q0 0 1.5 0 L9 0 Q11 0 12 2 L15 6.5Z" fill="#aeaeae"/></svg>
<span class="t" style="left:609.00px;top:234.00px;font-size:5px;line-height:6.00px;color:#222;font-weight:bold;transform:scaleX(1.200);">Ai</span>
<svg style="left:617.00px;top:233.50px;" width="11" height="6.5" viewBox="0 0 11 6.5"><path d="M0 6.5 Q2 6.5 3.5 3 Q4.5 0 7 0 H11 V6.5Z" fill="#aeaeae"/></svg>
<svg style="left:621.50px;top:235.00px;" width="4.5" height="4" viewBox="0 0 4.5 4"><path d="M0.9 0.4L3.7 2L0.9 3.6Z" fill="#111"/></svg>
<div style="left:606.30px;top:231.00px;width:5.50px;height:0.80px;background:#c8c8c8;"></div>
<div style="left:607.30px;top:244.30px;width:10.50px;height:60.20px;background:#93a1c8;"></div>
<div style="left:608.50px;top:245.20px;width:3.10px;height:1.90px;background:#fff;"></div>
<div style="left:613.40px;top:245.20px;width:3.10px;height:1.90px;background:#fff;"></div>
<div style="left:608.50px;top:248.00px;width:3.10px;height:55.80px;background:#fff;"></div>
<div style="left:613.40px;top:248.00px;width:3.10px;height:55.80px;background:#fff;"></div>
<div style="left:618.50px;top:249.50px;width:8.50px;height:0.70px;background:#333;"></div>
<span class="t" style="left:623.00px;top:244.60px;font-size:4.5px;line-height:5.40px;color:#111;font-weight:bold;">0</span>
<span class="t" style="left:621.50px;top:261.42px;font-size:4.3px;line-height:5.16px;color:#8a8a8a;">-6</span>
<div style="left:618.50px;top:265.80px;width:8.50px;height:0.50px;background:#999;"></div>
<span class="t" style="left:620.00px;top:272.42px;font-size:4.3px;line-height:5.16px;color:#8a8a8a;">-12</span>
<div style="left:618.50px;top:276.80px;width:8.50px;height:0.50px;background:#999;"></div>
<span class="t" style="left:620.00px;top:280.12px;font-size:4.3px;line-height:5.16px;color:#8a8a8a;">-18</span>
<div style="left:618.50px;top:284.50px;width:8.50px;height:0.50px;background:#999;"></div>
<span class="t" style="left:620.00px;top:289.42px;font-size:4.3px;line-height:5.16px;color:#8a8a8a;">-30</span>
<div style="left:618.50px;top:293.80px;width:8.50px;height:0.50px;background:#999;"></div>
<span class="t" style="left:621.50px;top:298.92px;font-size:4.3px;line-height:5.16px;color:#8a8a8a;">-∞</span>
<div style="left:618.50px;top:303.30px;width:8.50px;height:0.50px;background:#999;"></div>
<div style="left:606.00px;top:320.00px;width:22.00px;height:75.50px;background:#aeaeae;"></div>
<div style="left:607.00px;top:310.80px;width:9.00px;height:1.00px;background:#c8c8c8;"></div>
<svg style="left:606.50px;top:314.00px;" width="15" height="6.2" viewBox="0 0 15 6.2"><path d="M0 6.2 L0 1.5 Q0 0 1.5 0 L9 0 Q11 0 12 2 L15 6.2Z" fill="#aeaeae"/></svg>
<span class="t" style="left:609.00px;top:314.54px;font-size:4.6px;line-height:5.52px;color:#444;font-weight:bold;">W</span>
<svg style="left:617.00px;top:314.00px;" width="11" height="6.2" viewBox="0 0 11 6.2"><path d="M0 6.2 Q2 6.2 3.5 3 Q4.5 0 7 0 H11 V6.2Z" fill="#aeaeae"/></svg>
<svg style="left:621.50px;top:315.30px;" width="4.5" height="4" viewBox="0 0 4.5 4"><path d="M0.9 0.4L3.7 2L0.9 3.6Z" fill="#111"/></svg>
<div style="left:607.00px;top:322.00px;width:9.70px;height:8.00px;background:#eeeeee;box-shadow:0 0 0 0.4px #777;"></div>
<svg style="left:609.50px;top:322.80px;" width="5" height="7" viewBox="0 0 5 7"><path d="M0.6 0.4V5.4L1.9 4.3L2.9 6.4L3.8 6L2.8 4H4.5Z" fill="#111"/></svg>
<div style="left:618.50px;top:323.50px;width:7.50px;height:4.60px;background:transparent;border:0.8px dashed #222;box-sizing:border-box;"></div>
<div style="left:620.50px;top:325.50px;width:3.50px;height:0.80px;background:#222;"></div>
<svg style="left:608.00px;top:331.50px;" width="8" height="6" viewBox="0 0 8 6"><path d="M0.5 3H7.5M4 0.5V5.5M2 1.8L0.6 3L2 4.2M6 1.8L7.4 3L6 4.2" stroke="#222" stroke-width="0.8" fill="none"/></svg>
<svg style="left:618.50px;top:331.50px;" width="8" height="6" viewBox="0 0 8 6"><path d="M0.5 1.6H7.5M0.5 4.4H7.5M2.5 0.4V5.6M5.5 0.4V5.6" stroke="#222" stroke-width="0.8" fill="none"/></svg>
<svg style="left:608.00px;top:339.50px;" width="8" height="6" viewBox="0 0 8 6"><path d="M0.5 1.5H3V4.5H7.5M1.8 0.4V2.6M6 3.4V5.6" stroke="#222" stroke-width="0.8" fill="none"/></svg>
<svg style="left:618.50px;top:339.50px;" width="8" height="6" viewBox="0 0 8 6"><path d="M1 1L6 5M2 5L6.5 1.5" stroke="#888" stroke-width="0.8" fill="none"/><circle cx="5.5" cy="4.5" r="1.2" fill="#ccc" stroke="#777" stroke-width="0.4"/></svg>
<svg style="left:608.00px;top:348.50px;" width="8" height="6" viewBox="0 0 8 6"><path d="M0.6 0.5V5.5M7.4 0.5V5.5M0.6 3H7.4M2 1.9L0.9 3L2 4.1M6 1.9L7.1 3L6 4.1" stroke="#222" stroke-width="0.7" fill="none"/></svg>
<svg style="left:618.50px;top:348.50px;" width="8" height="6" viewBox="0 0 8 6"><path d="M0.5 3H7.5M4 0.5V5.5" stroke="#222" stroke-width="0.7" fill="none"/><ellipse cx="4" cy="3" rx="2.3" ry="1.8" fill="none" stroke="#222" stroke-width="0.7"/></svg>
<svg style="left:609.50px;top:356.30px;" width="5" height="8" viewBox="0 0 5 8"><path d="M2.3 0.5Q3.6 2 3.2 4.2L4.4 5V7.5H1.2V4.6L1.8 3.4Z" fill="#e8e8e8" stroke="#333" stroke-width="0.5"/></svg>
<svg style="left:608.00px;top:365.00px;" width="8" height="8" viewBox="0 0 8 8"><path d="M1 3.5Q0.6 2 1.8 2.2L2 1.2Q3 0.6 3.4 1.4Q4.2 0.5 4.8 1.4Q5.8 1 6 2.2Q7 2.4 6.6 4L6 6.4Q4 7.6 2.4 6.6Z" fill="#f0f0f0" stroke="#555" stroke-width="0.4"/></svg>
<svg style="left:618.50px;top:365.00px;" width="8" height="8" viewBox="0 0 8 8"><circle cx="3" cy="3" r="2" fill="#ddd" stroke="#333" stroke-width="0.7"/><path d="M4.5 4.5L7 7.2" stroke="#333" stroke-width="1.1"/></svg>
</div></body></html>
